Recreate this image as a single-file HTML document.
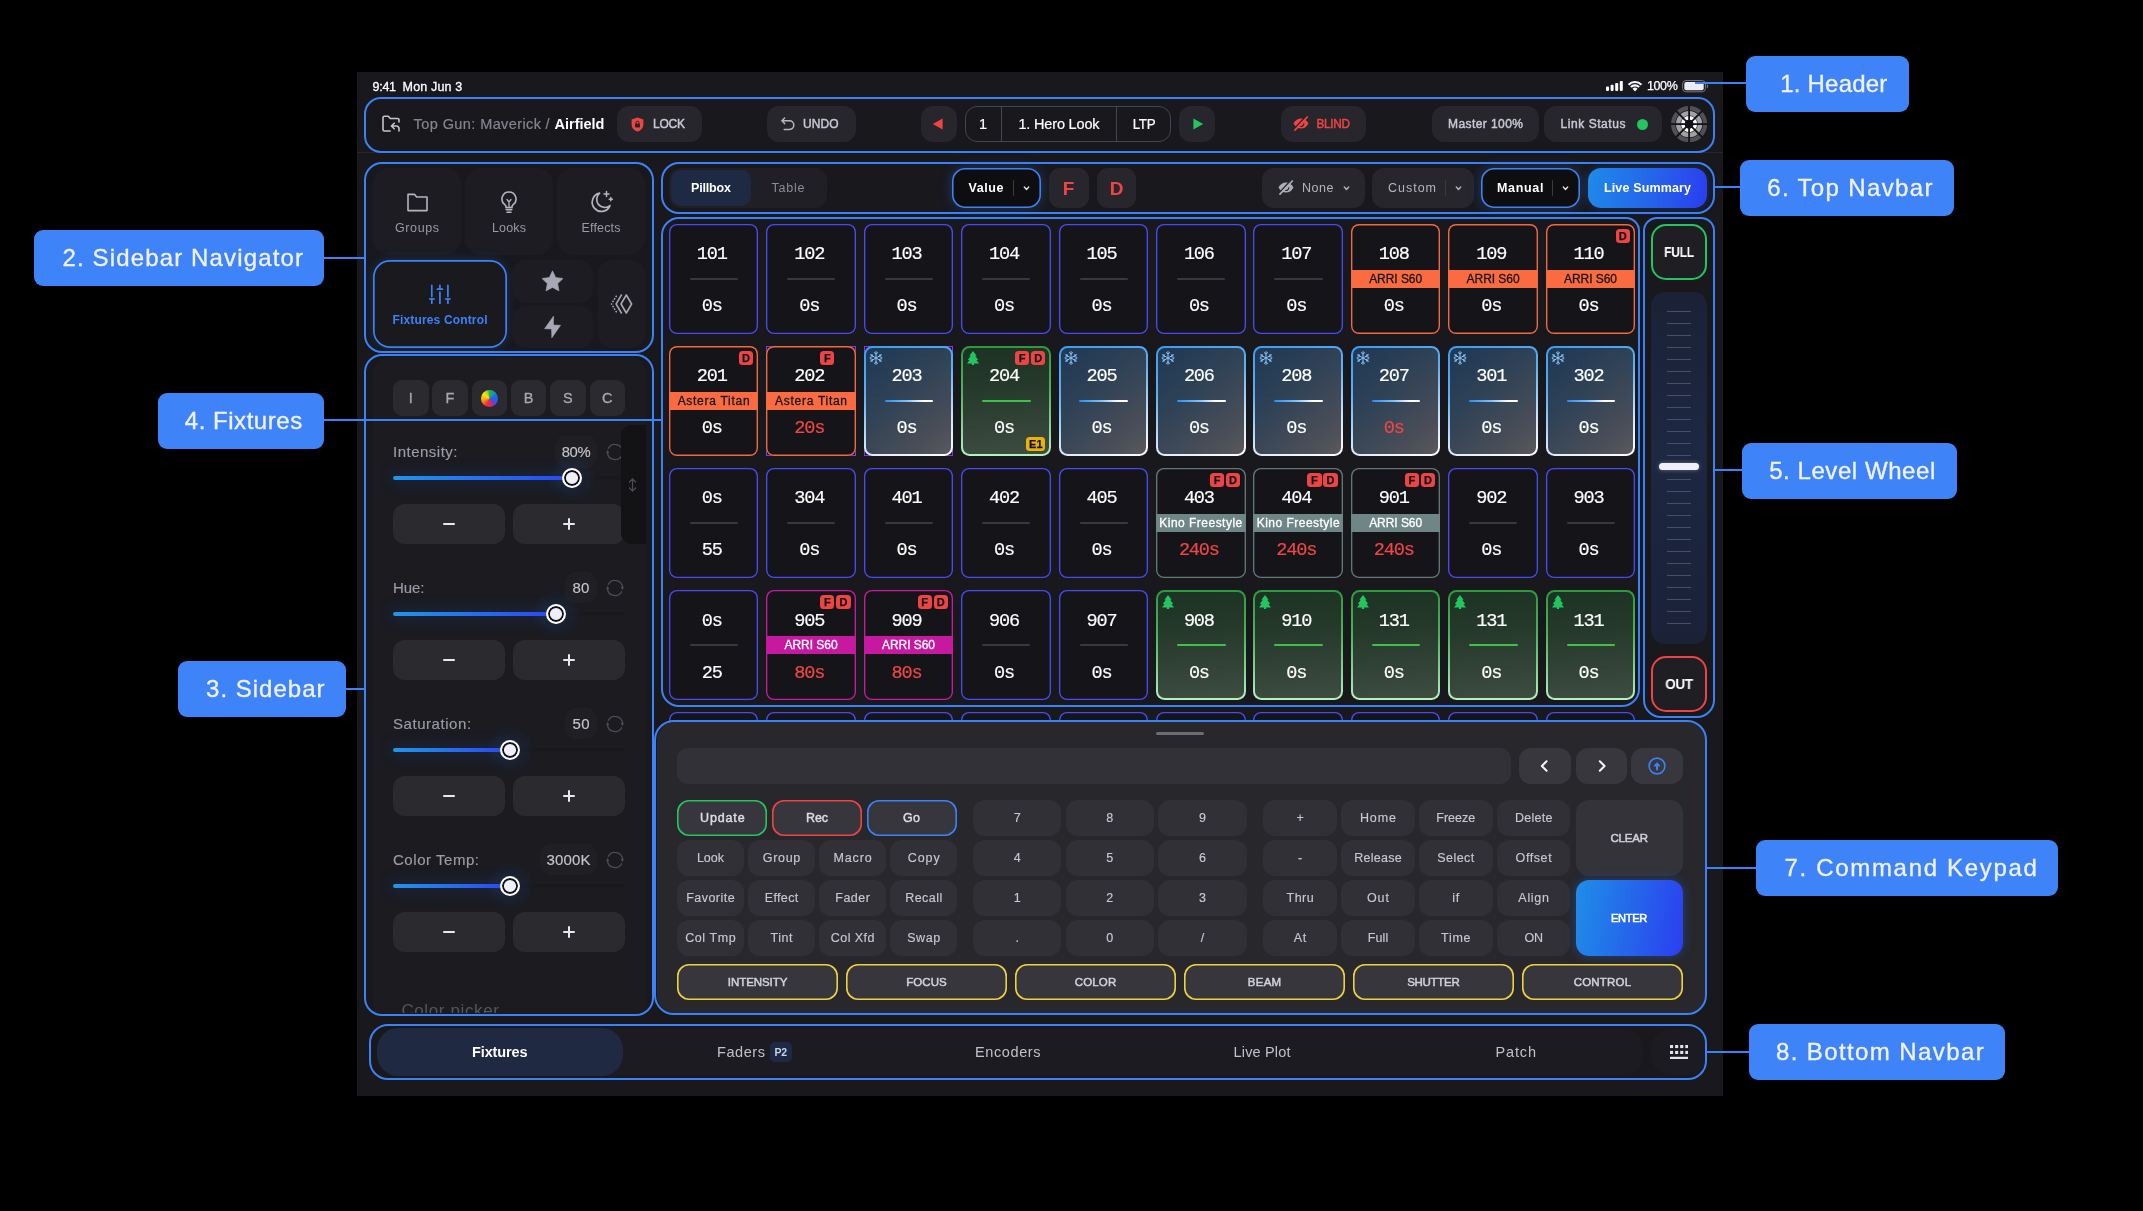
<!DOCTYPE html>
<html lang="en"><head><meta charset="utf-8"><title>Lighting Console UI</title><style>
*{box-sizing:border-box;margin:0;padding:0}
html,body{width:2143px;height:1211px;background:#000;overflow:hidden}
body{font-family:"Liberation Sans",sans-serif;color:#fff;position:relative}
div{position:absolute}
#w{left:0;top:0;width:2143px;height:1211px;will-change:transform}
.t{white-space:nowrap}
.ol{border:2px solid #3b82f6;border-radius:18px}
</style></head><body>
<div id="w">
<div style="left:357px;top:72px;width:1366px;height:1024px;background:#18181d;"></div>
<div style="left:357px;top:151.5px;width:1366px;height:1px;background:#26262b;"></div>
<div class="t" style="left:372.6px;top:78px;height:18px;font-size:12.5px;line-height:18px;color:#fff;-webkit-text-stroke:0.3px #fff;letter-spacing:-0.31px;">9:41</div>
<div class="t" style="left:402.6px;top:78px;height:18px;font-size:12.5px;line-height:18px;color:#fff;-webkit-text-stroke:0.3px #fff;letter-spacing:0.17px;">Mon Jun 3</div>
<svg style="position:absolute;left:1606px;top:81px;" width="17" height="10" viewBox="0 0 17 10"><rect x="0" y="5.5" width="3" height="4.4" rx=".8" fill="#fff"/><rect x="4.6" y="3.7" width="3" height="6.2" rx=".8" fill="#fff"/><rect x="9.2" y="1.9" width="3" height="8" rx=".8" fill="#fff"/><rect x="13.8" y="0.1" width="3" height="9.8" rx=".8" fill="#fff"/></svg>
<svg style="position:absolute;left:1626.6px;top:79.8px;" width="16" height="12" viewBox="0 0 16 12"><path d="M1.57 4.65A9.25 9.25 0 0 1 14.43 4.65" fill="none" stroke="#fff" stroke-width="2.1"/><path d="M3.87 7.02A5.95 5.95 0 0 1 12.13 7.02" fill="none" stroke="#fff" stroke-width="2.1"/><path d="M8 11.4 5.5 8.8A3.6 3.6 0 0 1 10.5 8.8z" fill="#fff"/></svg>
<div class="t" style="left:1462.35px;top:77px;width:400px;height:18px;margin-left:-0.18px;text-align:center;font-size:12.5px;line-height:18px;color:#fff;-webkit-text-stroke:0.25px #fff;letter-spacing:-0.36px;">100%</div>
<svg style="position:absolute;left:1681.5px;top:79.9px;" width="27" height="13" viewBox="0 0 27 13"><rect x=".6" y=".6" width="22.8" height="11.2" rx="3.3" fill="none" stroke="#77777d" stroke-width="1"/><rect x="2.3" y="2.1" width="19.4" height="8.2" rx="1.8" fill="#ececf8"/><path d="M24.8 4.2v4c.9-.3 1.4-1.1 1.4-2s-.5-1.7-1.4-2z" fill="#77777d"/></svg>
<div class="ol" style="left:364px;top:97px;width:1351px;height:56px;border-radius:17px;"></div>
<svg style="position:absolute;left:382px;top:115px;" width="19" height="18" viewBox="0 0 19 18"><path d="M8.2 16H2.4A1.4 1.4 0 0 1 1 14.6V2.6A1.4 1.4 0 0 1 2.4 1.2h3.9l2 2.3h7.3A1.4 1.4 0 0 1 17 4.9v2" fill="none" stroke="#c4c4cc" stroke-width="1.6" stroke-linecap="round" stroke-linejoin="round"/><path d="M12.2 8.2 9.4 11l2.8 2.8M9.6 11h4.6a2.8 2.8 0 0 1 2.8 2.8V16" fill="none" stroke="#c4c4cc" stroke-width="1.6" stroke-linecap="round" stroke-linejoin="round"/></svg>
<div class="t" style="left:413.6px;top:114px;height:20px;font-size:14.5px;line-height:20px;color:#85858f;-webkit-text-stroke:0.2px #85858f;letter-spacing:0.41px;">Top Gun: Maverick</div>
<div class="t" style="left:545.5px;top:114px;height:20px;font-size:14.5px;line-height:20px;color:#85858f;-webkit-text-stroke:0.2px #85858f;">/</div>
<div class="t" style="left:554.5px;top:114px;height:20px;font-size:14.5px;line-height:20px;color:#fff;font-weight:bold;">Airfield</div>
<div style="left:617px;top:106px;width:85px;height:36px;background:#26262c;border-radius:12px;"></div>
<svg style="position:absolute;left:630.5px;top:116.5px;" width="13" height="15" viewBox="0 0 13 15"><path d="M6.5.4 12.4 2.6v4.6c0 3.6-2.5 6.3-5.9 7.4C3.1 13.5.6 10.8.6 7.2V2.6z" fill="#ef4444"/><rect x="4" y="6.6" width="5" height="4" rx=".8" fill="#26262c"/><path d="M5 6.8V5.6a1.5 1.5 0 0 1 3 0v1.2" fill="none" stroke="#26262c" stroke-width="1"/></svg>
<div class="t" style="left:469px;top:115px;width:400px;height:18px;margin-left:-0.11px;text-align:center;font-size:12px;line-height:18px;color:#c8c8d4;-webkit-text-stroke:0.45px #c8c8d4;letter-spacing:-0.23px;">LOCK</div>
<div style="left:767px;top:106px;width:89px;height:36px;background:#26262c;border-radius:12px;"></div>
<svg style="position:absolute;left:780.5px;top:117px;" width="14" height="14" viewBox="0 0 14 14"><path d="M3.6 1 1 3.8l2.6 2.8" fill="none" stroke="#b8b8c0" stroke-width="1.5" stroke-linecap="round" stroke-linejoin="round"/><path d="M1.3 3.8h7.2a4.3 4.3 0 0 1 0 8.6H3.2" fill="none" stroke="#b8b8c0" stroke-width="1.5" stroke-linecap="round"/></svg>
<div class="t" style="left:620.75px;top:115px;width:400px;height:18px;margin-left:0.03px;text-align:center;font-size:12px;line-height:18px;color:#c8c8d4;-webkit-text-stroke:0.45px #c8c8d4;letter-spacing:0.06px;">UNDO</div>
<div style="left:921px;top:106px;width:36px;height:36px;background:#26262c;border-radius:12px;"></div>
<svg style="position:absolute;left:932px;top:118px;" width="11" height="12" viewBox="0 0 11 12"><path d="M10.6.6v10.8L.8 6z" fill="#ef4444"/></svg>
<div style="left:965px;top:106px;width:206px;height:36px;border:1px solid #45454d;border-radius:12px;"></div>
<div style="left:1001px;top:107px;width:1px;height:34px;background:#45454d;"></div>
<div style="left:1116px;top:107px;width:1px;height:34px;background:#45454d;"></div>
<div class="t" style="left:783px;top:114px;width:400px;height:20px;margin-left:0px;text-align:center;font-size:14.5px;line-height:20px;color:#fff;-webkit-text-stroke:0.2px #fff;">1</div>
<div class="t" style="left:859px;top:114px;width:400px;height:20px;margin-left:-0.09px;text-align:center;font-size:14.5px;line-height:20px;color:#fff;-webkit-text-stroke:0.2px #fff;letter-spacing:-0.18px;">1. Hero Look</div>
<div class="t" style="left:944px;top:114px;width:400px;height:20px;margin-left:-0.15px;text-align:center;font-size:14.5px;line-height:20px;color:#fff;-webkit-text-stroke:0.2px #fff;transform:scaleX(0.923);transform-origin:50% 50%;letter-spacing:-0.3px;">LTP</div>
<div style="left:1179px;top:106px;width:36px;height:36px;background:#26262c;border-radius:12px;"></div>
<svg style="position:absolute;left:1193px;top:118px;" width="11" height="12" viewBox="0 0 11 12"><path d="M.4.6v10.8L10.2 6z" fill="#22c55e"/></svg>
<div style="left:1281px;top:106px;width:85px;height:36px;background:#26262c;border-radius:12px;"></div>
<svg style="position:absolute;left:1292.6px;top:116.3px;" width="16" height="15" viewBox="0 0 16 15"><path d="M.5 7.5C2.4 3.9 5 2.4 8 2.4s5.6 1.5 7.5 5.1C13.6 11.1 11 12.6 8 12.6S2.4 11.1.5 7.5z" fill="#ef4444"/><path d="M7.6 10.5a3 3 0 0 0 3.3-3" fill="none" stroke="#26262c" stroke-width="1.1" stroke-linecap="round"/><path d="M13.1.1.9 13.3" stroke="#26262c" stroke-width="1.5"/><path d="M14.3 1 2 14.1" stroke="#ef4444" stroke-width="1.7" stroke-linecap="round"/></svg>
<div class="t" style="left:1133.25px;top:115px;width:400px;height:18px;margin-left:-0.15px;text-align:center;font-size:12px;line-height:18px;color:#ef4444;-webkit-text-stroke:0.45px #ef4444;transform:scaleX(0.981);transform-origin:50% 50%;letter-spacing:-0.3px;">BLIND</div>
<div style="left:1432px;top:106px;width:107px;height:36px;background:#26262c;border-radius:12px;"></div>
<div class="t" style="left:1285.5px;top:115px;width:400px;height:18px;margin-left:0.21px;text-align:center;font-size:12px;line-height:18px;color:#c8c8d4;-webkit-text-stroke:0.45px #c8c8d4;letter-spacing:0.43px;">Master 100%</div>
<div style="left:1544px;top:106px;width:118px;height:36px;background:#26262c;border-radius:12px;"></div>
<div class="t" style="left:1393px;top:115px;width:400px;height:18px;margin-left:0.28px;text-align:center;font-size:12px;line-height:18px;color:#c8c8d4;-webkit-text-stroke:0.45px #c8c8d4;letter-spacing:0.56px;">Link Status</div>
<div style="left:1636.5px;top:118.5px;width:11px;height:11px;background:#22c55e;border-radius:50%;"></div>
<svg style="position:absolute;left:1670.9px;top:105.9px;" width="36.2" height="36.2" viewBox="0 0 36.2 36.2"><circle cx="18.1" cy="18.1" r="16" fill="none" stroke="#505056" stroke-width="4.2"/><circle cx="18.1" cy="18.1" r="10.95" fill="none" stroke="#a2a2a6" stroke-width="4.4"/><circle cx="18.1" cy="18.1" r="6.2" fill="none" stroke="#ffffff" stroke-width="3.8"/><path d="M18.1 18.1L18.10 36.70" stroke="#131317" stroke-width="1.8"/><path d="M18.1 18.1L4.95 31.25" stroke="#131317" stroke-width="1.8"/><path d="M18.1 18.1L-0.50 18.10" stroke="#131317" stroke-width="1.8"/><path d="M18.1 18.1L4.95 4.95" stroke="#131317" stroke-width="1.8"/><path d="M18.1 18.1L18.10 -0.50" stroke="#131317" stroke-width="1.8"/><path d="M18.1 18.1L31.25 4.95" stroke="#131317" stroke-width="1.8"/><path d="M18.1 18.1L36.70 18.10" stroke="#131317" stroke-width="1.8"/><path d="M18.1 18.1L31.25 31.25" stroke="#131317" stroke-width="1.8"/><circle cx="18.1" cy="18.1" r="4.4" fill="#131317"/></svg>
<div class="ol" style="left:661px;top:162px;width:1054px;height:52px;"></div>
<div style="left:668.5px;top:168px;width:158.5px;height:40px;background:#1f1f25;border-radius:12px;"></div>
<div style="left:671px;top:170px;width:80px;height:36px;background:#1e2a44;border-radius:10px;"></div>
<div class="t" style="left:511px;top:179px;width:400px;height:18px;margin-left:-0.08px;text-align:center;font-size:12.5px;line-height:18px;color:#fff;font-weight:bold;letter-spacing:-0.16px;">Pillbox</div>
<div class="t" style="left:588px;top:179px;width:400px;height:18px;margin-left:0.39px;text-align:center;font-size:12.5px;line-height:18px;color:#8c8c96;letter-spacing:0.78px;">Table</div>
<div style="left:952.4px;top:167.8px;width:88.4px;height:40.4px;background:#0e0e11;box-shadow:inset 0 0 0 1.6px #3b82f6,0 0 14px rgba(59,130,246,.30);border-radius:13px;"></div>
<div class="t" style="left:786px;top:179px;width:400px;height:18px;margin-left:0.29px;text-align:center;font-size:12.5px;line-height:18px;color:#fff;font-weight:bold;letter-spacing:0.58px;">Value</div>
<div style="left:1012.5px;top:180px;width:1px;height:16px;background:#3a3a42;"></div>
<svg style="position:absolute;left:1023px;top:186px;" width="7" height="5" viewBox="0 0 7 5"><path d="M1.3 1.1l2.2 2.3 2.2-2.3" fill="none" stroke="#e0e0e8" stroke-width="1.4" stroke-linecap="round" stroke-linejoin="round"/></svg>
<div style="left:1049px;top:168px;width:39.5px;height:40px;background:#26262c;border-radius:11px;"></div>
<div class="t" style="left:868.5px;top:176px;width:400px;height:25px;margin-left:0px;text-align:center;font-size:19px;line-height:25px;color:#ef4444;font-weight:bold;">F</div>
<div style="left:1096.5px;top:168px;width:39.5px;height:40px;background:#26262c;border-radius:11px;"></div>
<div class="t" style="left:916.5px;top:176px;width:400px;height:25px;margin-left:0px;text-align:center;font-size:19px;line-height:25px;color:#ef4444;font-weight:bold;">D</div>
<div style="left:1262px;top:168px;width:102.5px;height:40px;background:#26262c;border-radius:12px;"></div>
<svg style="position:absolute;left:1278.2px;top:180.4px;" width="16" height="15" viewBox="0 0 16 15"><path d="M.5 7.5C2.4 3.9 5 2.4 8 2.4s5.6 1.5 7.5 5.1C13.6 11.1 11 12.6 8 12.6S2.4 11.1.5 7.5z" fill="#aeaeb8"/><path d="M7.6 10.5a3 3 0 0 0 3.3-3" fill="none" stroke="#26262c" stroke-width="1.1" stroke-linecap="round"/><path d="M13.1.1.9 13.3" stroke="#26262c" stroke-width="1.5"/><path d="M14.3 1 2 14.1" stroke="#aeaeb8" stroke-width="1.7" stroke-linecap="round"/></svg>
<div class="t" style="left:1117.75px;top:179px;width:400px;height:18px;margin-left:0.27px;text-align:center;font-size:12.5px;line-height:18px;color:#b4b4bc;letter-spacing:0.54px;">None</div>
<svg style="position:absolute;left:1342.5px;top:186px;" width="7" height="5" viewBox="0 0 7 5"><path d="M1.3 1.1l2.2 2.3 2.2-2.3" fill="none" stroke="#b4b4bc" stroke-width="1.4" stroke-linecap="round" stroke-linejoin="round"/></svg>
<div style="left:1372px;top:168px;width:101.5px;height:40px;background:#26262c;border-radius:12px;"></div>
<div class="t" style="left:1212px;top:179px;width:400px;height:18px;margin-left:0.49px;text-align:center;font-size:12.5px;line-height:18px;color:#b4b4bc;letter-spacing:0.99px;">Custom</div>
<div style="left:1445px;top:180px;width:1px;height:16px;background:#3a3a42;"></div>
<svg style="position:absolute;left:1455px;top:186px;" width="7" height="5" viewBox="0 0 7 5"><path d="M1.3 1.1l2.2 2.3 2.2-2.3" fill="none" stroke="#b4b4bc" stroke-width="1.4" stroke-linecap="round" stroke-linejoin="round"/></svg>
<div style="left:1480.6px;top:167.8px;width:99.8px;height:40.4px;background:#0e0e11;box-shadow:inset 0 0 0 1.6px #3b82f6,0 0 14px rgba(59,130,246,.30);border-radius:13px;"></div>
<div class="t" style="left:1320.25px;top:179px;width:400px;height:18px;margin-left:0.34px;text-align:center;font-size:12.5px;line-height:18px;color:#fff;font-weight:bold;letter-spacing:0.69px;">Manual</div>
<div style="left:1552px;top:180px;width:1px;height:16px;background:#3a3a42;"></div>
<svg style="position:absolute;left:1562px;top:186px;" width="7" height="5" viewBox="0 0 7 5"><path d="M1.3 1.1l2.2 2.3 2.2-2.3" fill="none" stroke="#e0e0e8" stroke-width="1.4" stroke-linecap="round" stroke-linejoin="round"/></svg>
<div style="left:1588px;top:168px;width:119px;height:40px;background:linear-gradient(100deg,#1f8ae8 0%,#2563eb 55%,#2b3df0 100%);border-radius:13px;box-shadow:0 0 10px rgba(37,99,235,.35);"></div>
<div class="t" style="left:1447.5px;top:179px;width:400px;height:18px;margin-left:0.07px;text-align:center;font-size:12.5px;line-height:18px;color:#fff;font-weight:bold;letter-spacing:0.14px;">Live Summary</div>
<div class="ol" style="left:364px;top:162px;width:290px;height:191px;"></div>
<div style="left:373px;top:168px;width:88px;height:87px;background:#1c1c22;border-radius:16px;"></div>
<div class="t" style="left:217px;top:219px;width:400px;height:18px;margin-left:0.3px;text-align:center;font-size:12.5px;line-height:18px;color:#9a9aa4;letter-spacing:0.6px;">Groups</div>
<div style="left:465px;top:168px;width:88px;height:87px;background:#1c1c22;border-radius:16px;"></div>
<div class="t" style="left:309px;top:219px;width:400px;height:18px;margin-left:0.08px;text-align:center;font-size:12.5px;line-height:18px;color:#9a9aa4;letter-spacing:0.16px;">Looks</div>
<div style="left:557px;top:168px;width:88px;height:87px;background:#1c1c22;border-radius:16px;"></div>
<div class="t" style="left:401px;top:219px;width:400px;height:18px;margin-left:0.08px;text-align:center;font-size:12.5px;line-height:18px;color:#9a9aa4;letter-spacing:0.17px;">Effects</div>
<svg style="position:absolute;left:406.5px;top:192.5px;" width="21" height="19" viewBox="0 0 21 19"><path d="M1 17.6V1.4h6.6l2 2.6H20v13.6z" fill="none" stroke="#b4b4bc" stroke-width="1.6" stroke-linejoin="round"/></svg>
<svg style="position:absolute;left:500px;top:191px;" width="18" height="23" viewBox="0 0 18 23"><path d="M9 1a7 7 0 0 0-4.2 12.6c.7.6 1.2 1.3 1.2 2.1v.8h6v-.8c0-.8.5-1.5 1.2-2.1A7 7 0 0 0 9 1z" fill="none" stroke="#b4b4bc" stroke-width="1.6"/><path d="M6.2 18.6h5.6M7 21.2h4" stroke="#b4b4bc" stroke-width="1.6" stroke-linecap="round"/><path d="M7 8.5 9 11l2-2.5M9 11v5" fill="none" stroke="#b4b4bc" stroke-width="1.3" stroke-linecap="round" stroke-linejoin="round"/></svg>
<svg style="position:absolute;left:590px;top:189.5px;" width="24" height="24" viewBox="0 0 24 24"><path d="M9.6 3.2A9.2 9.2 0 1 0 20 15.6 7.6 7.6 0 0 1 9.6 3.2z" fill="none" stroke="#b4b4bc" stroke-width="1.7" stroke-linejoin="round"/><path d="M16.5 1.5v5M14 4h5M20.8 7.6v3.2M19.2 9.2h3.2" stroke="#b4b4bc" stroke-width="1.5" stroke-linecap="round"/></svg>
<div style="left:373px;top:260px;width:134px;height:87.5px;background:#19191e;border-radius:17px;box-shadow:inset 0 0 0 1.7px #3b82f6,0 0 12px rgba(59,130,246,.22);"></div>
<svg style="position:absolute;left:429px;top:283.5px;" width="22" height="20" viewBox="0 0 22 20"><path d="M2.8 1.3V12.6M2.8 15v4.4M10.9 1.3V5M10.9 8.2V19.4M18.9 1.3V12.6M18.9 15v4.4" stroke="#3b82f6" stroke-width="1.7" stroke-linecap="round"/><path d="M.6 15h4.6M8.4 5.2h5M16.6 15h4.6" stroke="#3b82f6" stroke-width="1.7" stroke-linecap="round"/></svg>
<div class="t" style="left:240px;top:311px;width:400px;height:18px;margin-left:0.08px;text-align:center;font-size:12px;line-height:18px;color:#3b82f6;font-weight:bold;letter-spacing:0.16px;">Fixtures Control</div>
<div style="left:512px;top:260px;width:80.7px;height:42.5px;background:#1c1c22;border-radius:14px;"></div>
<svg style="position:absolute;left:540.5px;top:270px;" width="23" height="22" viewBox="0 0 23 22"><path d="M11.5.8l3.2 6.7 7.3 1-5.3 5.1 1.3 7.3-6.5-3.5L5 20.9l1.3-7.3L1 8.5l7.3-1z" fill="#a8a8b4" stroke="#a8a8b4" stroke-width=".6" stroke-linejoin="round"/></svg>
<div style="left:512px;top:305.5px;width:80.7px;height:42.3px;background:#1c1c22;border-radius:14px;"></div>
<svg style="position:absolute;left:543.5px;top:316px;" width="17" height="22" viewBox="0 0 17 22"><path d="M9.6 0 .5 12.7l7 .3.3 8.9L16.6 9.3 9.5 9z" fill="#a8a8b4" stroke="#a8a8b4" stroke-width=".5" stroke-linejoin="round"/></svg>
<div style="left:597.5px;top:260px;width:47.5px;height:87.5px;background:#1c1c22;border-radius:14px;"></div>
<svg style="position:absolute;left:609px;top:293px;" width="24" height="22" viewBox="0 0 24 22"><path d="M17.3 2 22.6 11 17.3 20 12 11z" fill="none" stroke="#a8a8b0" stroke-width="1.6" stroke-linejoin="round"/><path d="M12.4 2 7.1 11l5.3 9" fill="none" stroke="#a8a8b0" stroke-width="1.5" stroke-linejoin="round" stroke-linecap="round"/><path d="M7.6 2.6 2.5 11l5.1 8.4" fill="none" stroke="#a8a8b0" stroke-width="1.4" stroke-dasharray="1.7 1.3"/></svg>
<div style="left:373px;top:357px;width:272.5px;height:656px;background:#1b1b20;border-radius:15px 15px 0 0;"></div>
<div style="left:393px;top:380px;width:35.5px;height:36px;background:#2a2a2f;border-radius:9px;"></div>
<div class="t" style="left:210.75px;top:388px;width:400px;height:20px;margin-left:0px;text-align:center;font-size:14.5px;line-height:20px;color:#a8a8b2;-webkit-text-stroke:0.3px #a8a8b2;">I</div>
<div style="left:432.3px;top:380px;width:35.5px;height:36px;background:#2a2a2f;border-radius:9px;"></div>
<div class="t" style="left:250.05px;top:388px;width:400px;height:20px;margin-left:0px;text-align:center;font-size:14.5px;line-height:20px;color:#a8a8b2;-webkit-text-stroke:0.3px #a8a8b2;">F</div>
<div style="left:471.6px;top:380px;width:35.5px;height:36px;background:#2a2a2f;border-radius:9px;"></div>
<div style="left:510.9px;top:380px;width:35.5px;height:36px;background:#2a2a2f;border-radius:9px;"></div>
<div class="t" style="left:328.65px;top:388px;width:400px;height:20px;margin-left:0px;text-align:center;font-size:14.5px;line-height:20px;color:#a8a8b2;-webkit-text-stroke:0.3px #a8a8b2;">B</div>
<div style="left:550.2px;top:380px;width:35.5px;height:36px;background:#2a2a2f;border-radius:9px;"></div>
<div class="t" style="left:367.95px;top:388px;width:400px;height:20px;margin-left:0px;text-align:center;font-size:14.5px;line-height:20px;color:#a8a8b2;-webkit-text-stroke:0.3px #a8a8b2;">S</div>
<div style="left:589.5px;top:380px;width:35.5px;height:36px;background:#2a2a2f;border-radius:9px;"></div>
<div class="t" style="left:407.25px;top:388px;width:400px;height:20px;margin-left:0px;text-align:center;font-size:14.5px;line-height:20px;color:#a8a8b2;-webkit-text-stroke:0.3px #a8a8b2;">C</div>
<div style="left:480.5px;top:389.5px;width:17px;height:17px;border-radius:50%;background:conic-gradient(from 0deg,#2fb050 0deg,#10a098 35deg,#1a6af0 70deg,#2060f0 100deg,#6a40c8 135deg,#e02470 170deg,#f02838 200deg,#f56a1f 235deg,#ffb010 265deg,#ffe600 310deg,#a8d428 340deg,#2fb050 360deg);"></div>
<div class="t" style="left:393px;top:441px;height:21px;font-size:15px;line-height:21px;color:#9c9ca6;-webkit-text-stroke:0.15px #9c9ca6;letter-spacing:0.5px;">Intensity:</div>
<div style="left:555px;top:436.2px;width:42.3px;height:31.4px;background:#1f1f24;border-radius:10px;"></div>
<div class="t" style="left:376px;top:441px;width:400px;height:21px;margin-left:-0.15px;text-align:center;font-size:15px;line-height:21px;color:#c4c4cc;-webkit-text-stroke:0.15px #c4c4cc;transform:scaleX(0.986);transform-origin:50% 50%;letter-spacing:-0.3px;">80%</div>
<svg style="position:absolute;left:606px;top:442.7px;" width="18" height="18" viewBox="0 0 18 18"><path d="M2.11 5.79A7.6 7.6 0 0 1 16.57 8.34M15.89 12.21A7.6 7.6 0 0 1 1.43 9.66" fill="none" stroke="#4c4c56" stroke-width="1.3"/><path d="M14.7 8.1h3.3l-1.6 3.1zM0 9.9h3.3L1.6 6.8z" fill="#4c4c56"/></svg>
<div style="left:393px;top:475.9px;width:232px;height:4.2px;background:#19191d;border-radius:2px;"></div>
<div style="left:542px;top:448px;width:60px;height:60px;background:radial-gradient(circle,rgba(40,110,220,.16) 0%,rgba(40,110,220,.06) 40%,rgba(40,110,220,0) 60%);"></div>
<div style="left:393px;top:475.9px;width:179px;height:4.2px;background:linear-gradient(90deg,#1f96ea,#2b47f2);border-radius:2px;box-shadow:0 0 16px 3px rgba(37,99,235,.17);"></div>
<div style="left:562px;top:468px;width:20px;height:20px;background:#eeeefc;border:2px solid #fff;border-radius:50%;box-shadow:inset 0 0 0 1.9px #111115;"></div>
<div style="left:393px;top:504px;width:112px;height:40px;background:#2a2a2f;border-radius:12px;"></div>
<div style="left:513px;top:504px;width:112px;height:40px;background:#2a2a2f;border-radius:12px;"></div>
<div style="left:443.2px;top:523px;width:12px;height:1.8px;background:#e8e8f0;border-radius:1px;"></div>
<div style="left:563px;top:523px;width:12px;height:1.8px;background:#e8e8f0;border-radius:1px;"></div>
<div style="left:568.1px;top:517.9px;width:1.8px;height:12px;background:#e8e8f0;border-radius:1px;"></div>
<div class="t" style="left:393px;top:577px;height:21px;font-size:15px;line-height:21px;color:#9c9ca6;-webkit-text-stroke:0.15px #9c9ca6;letter-spacing:-0.06px;">Hue:</div>
<div style="left:565.3px;top:572.1px;width:32px;height:31.4px;background:#1f1f24;border-radius:10px;"></div>
<div class="t" style="left:380.95px;top:577px;width:400px;height:21px;margin-left:0.11px;text-align:center;font-size:15px;line-height:21px;color:#c4c4cc;-webkit-text-stroke:0.15px #c4c4cc;letter-spacing:0.22px;">80</div>
<svg style="position:absolute;left:606px;top:578.6px;" width="18" height="18" viewBox="0 0 18 18"><path d="M2.11 5.79A7.6 7.6 0 0 1 16.57 8.34M15.89 12.21A7.6 7.6 0 0 1 1.43 9.66" fill="none" stroke="#4c4c56" stroke-width="1.3"/><path d="M14.7 8.1h3.3l-1.6 3.1zM0 9.9h3.3L1.6 6.8z" fill="#4c4c56"/></svg>
<div style="left:393px;top:611.8px;width:232px;height:4.2px;background:#19191d;border-radius:2px;"></div>
<div style="left:526px;top:583.9px;width:60px;height:60px;background:radial-gradient(circle,rgba(40,110,220,.16) 0%,rgba(40,110,220,.06) 40%,rgba(40,110,220,0) 60%);"></div>
<div style="left:393px;top:611.8px;width:163px;height:4.2px;background:linear-gradient(90deg,#1f96ea,#2b47f2);border-radius:2px;box-shadow:0 0 16px 3px rgba(37,99,235,.17);"></div>
<div style="left:546px;top:603.9px;width:20px;height:20px;background:#eeeefc;border:2px solid #fff;border-radius:50%;box-shadow:inset 0 0 0 1.9px #111115;"></div>
<div style="left:393px;top:639.9px;width:112px;height:40px;background:#2a2a2f;border-radius:12px;"></div>
<div style="left:513px;top:639.9px;width:112px;height:40px;background:#2a2a2f;border-radius:12px;"></div>
<div style="left:443.2px;top:658.9px;width:12px;height:1.8px;background:#e8e8f0;border-radius:1px;"></div>
<div style="left:563px;top:658.9px;width:12px;height:1.8px;background:#e8e8f0;border-radius:1px;"></div>
<div style="left:568.1px;top:653.8px;width:1.8px;height:12px;background:#e8e8f0;border-radius:1px;"></div>
<div class="t" style="left:393px;top:713px;height:21px;font-size:15px;line-height:21px;color:#9c9ca6;-webkit-text-stroke:0.15px #9c9ca6;letter-spacing:0.55px;">Saturation:</div>
<div style="left:565.3px;top:708.1px;width:32px;height:31.4px;background:#1f1f24;border-radius:10px;"></div>
<div class="t" style="left:381.05px;top:713px;width:400px;height:21px;margin-left:0.31px;text-align:center;font-size:15px;line-height:21px;color:#c4c4cc;-webkit-text-stroke:0.15px #c4c4cc;letter-spacing:0.62px;">50</div>
<svg style="position:absolute;left:606px;top:714.6px;" width="18" height="18" viewBox="0 0 18 18"><path d="M2.11 5.79A7.6 7.6 0 0 1 16.57 8.34M15.89 12.21A7.6 7.6 0 0 1 1.43 9.66" fill="none" stroke="#4c4c56" stroke-width="1.3"/><path d="M14.7 8.1h3.3l-1.6 3.1zM0 9.9h3.3L1.6 6.8z" fill="#4c4c56"/></svg>
<div style="left:393px;top:747.8px;width:232px;height:4.2px;background:#19191d;border-radius:2px;"></div>
<div style="left:480px;top:719.9px;width:60px;height:60px;background:radial-gradient(circle,rgba(40,110,220,.16) 0%,rgba(40,110,220,.06) 40%,rgba(40,110,220,0) 60%);"></div>
<div style="left:393px;top:747.8px;width:117px;height:4.2px;background:linear-gradient(90deg,#1f96ea,#2b47f2);border-radius:2px;box-shadow:0 0 16px 3px rgba(37,99,235,.17);"></div>
<div style="left:500px;top:739.9px;width:20px;height:20px;background:#eeeefc;border:2px solid #fff;border-radius:50%;box-shadow:inset 0 0 0 1.9px #111115;"></div>
<div style="left:393px;top:775.9px;width:112px;height:40px;background:#2a2a2f;border-radius:12px;"></div>
<div style="left:513px;top:775.9px;width:112px;height:40px;background:#2a2a2f;border-radius:12px;"></div>
<div style="left:443.2px;top:794.9px;width:12px;height:1.8px;background:#e8e8f0;border-radius:1px;"></div>
<div style="left:563px;top:794.9px;width:12px;height:1.8px;background:#e8e8f0;border-radius:1px;"></div>
<div style="left:568.1px;top:789.8px;width:1.8px;height:12px;background:#e8e8f0;border-radius:1px;"></div>
<div class="t" style="left:393px;top:849px;height:21px;font-size:15px;line-height:21px;color:#9c9ca6;-webkit-text-stroke:0.15px #9c9ca6;letter-spacing:0.54px;">Color Temp:</div>
<div style="left:540.2px;top:844.1px;width:57.1px;height:31.4px;background:#1f1f24;border-radius:10px;"></div>
<div class="t" style="left:368.5px;top:849px;width:400px;height:21px;margin-left:0.08px;text-align:center;font-size:15px;line-height:21px;color:#c4c4cc;-webkit-text-stroke:0.15px #c4c4cc;letter-spacing:0.16px;">3000K</div>
<svg style="position:absolute;left:606px;top:850.6px;" width="18" height="18" viewBox="0 0 18 18"><path d="M2.11 5.79A7.6 7.6 0 0 1 16.57 8.34M15.89 12.21A7.6 7.6 0 0 1 1.43 9.66" fill="none" stroke="#4c4c56" stroke-width="1.3"/><path d="M14.7 8.1h3.3l-1.6 3.1zM0 9.9h3.3L1.6 6.8z" fill="#4c4c56"/></svg>
<div style="left:393px;top:883.8px;width:232px;height:4.2px;background:#19191d;border-radius:2px;"></div>
<div style="left:480px;top:855.9px;width:60px;height:60px;background:radial-gradient(circle,rgba(40,110,220,.16) 0%,rgba(40,110,220,.06) 40%,rgba(40,110,220,0) 60%);"></div>
<div style="left:393px;top:883.8px;width:117px;height:4.2px;background:linear-gradient(90deg,#1f96ea,#2b47f2);border-radius:2px;box-shadow:0 0 16px 3px rgba(37,99,235,.17);"></div>
<div style="left:500px;top:875.9px;width:20px;height:20px;background:#eeeefc;border:2px solid #fff;border-radius:50%;box-shadow:inset 0 0 0 1.9px #111115;"></div>
<div style="left:393px;top:911.9px;width:112px;height:40px;background:#2a2a2f;border-radius:12px;"></div>
<div style="left:513px;top:911.9px;width:112px;height:40px;background:#2a2a2f;border-radius:12px;"></div>
<div style="left:443.2px;top:930.9px;width:12px;height:1.8px;background:#e8e8f0;border-radius:1px;"></div>
<div style="left:563px;top:930.9px;width:12px;height:1.8px;background:#e8e8f0;border-radius:1px;"></div>
<div style="left:568.1px;top:925.8px;width:1.8px;height:12px;background:#e8e8f0;border-radius:1px;"></div>
<div style="left:621px;top:424.5px;width:24.5px;height:119.5px;background:#131316;border-radius:11px 0 0 11px;"></div>
<svg style="position:absolute;left:627.5px;top:477.5px;" width="9" height="14" viewBox="0 0 9 14"><path d="M4.5 1.2v11.6M1.4 4 4.5 1l3.1 3M1.4 10l3.1 3 3.1-3" fill="none" stroke="#4c4c54" stroke-width="1.2" stroke-linecap="round" stroke-linejoin="round"/></svg>
<div style="left:373px;top:995px;width:272px;height:18px;overflow:hidden;"><div class="t" style="left:28.4px;top:5px;font-size:17px;line-height:22px;color:#55555d;letter-spacing:.62px;">Color picker</div></div>
<div class="ol" style="left:364px;top:354px;width:290px;height:662px;"></div>
<div style="left:668.85px;top:712.1px;width:89.55px;height:109.8px;background:#151519;box-shadow:inset 0 0 0 1.35px #4a4af2;border-radius:8px;"></div>
<div style="left:766.28px;top:712.1px;width:89.55px;height:109.8px;background:#151519;box-shadow:inset 0 0 0 1.35px #4a4af2;border-radius:8px;"></div>
<div style="left:863.71px;top:712.1px;width:89.55px;height:109.8px;background:#151519;box-shadow:inset 0 0 0 1.35px #4a4af2;border-radius:8px;"></div>
<div style="left:961.14px;top:712.1px;width:89.55px;height:109.8px;background:#151519;box-shadow:inset 0 0 0 1.35px #4a4af2;border-radius:8px;"></div>
<div style="left:1058.57px;top:712.1px;width:89.55px;height:109.8px;background:#151519;box-shadow:inset 0 0 0 1.35px #4a4af2;border-radius:8px;"></div>
<div style="left:1156px;top:712.1px;width:89.55px;height:109.8px;background:#151519;box-shadow:inset 0 0 0 1.35px #4a4af2;border-radius:8px;"></div>
<div style="left:1253.43px;top:712.1px;width:89.55px;height:109.8px;background:#151519;box-shadow:inset 0 0 0 1.35px #4a4af2;border-radius:8px;"></div>
<div style="left:1350.86px;top:712.1px;width:89.55px;height:109.8px;background:#151519;box-shadow:inset 0 0 0 1.35px #4a4af2;border-radius:8px;"></div>
<div style="left:1448.29px;top:712.1px;width:89.55px;height:109.8px;background:#151519;box-shadow:inset 0 0 0 1.35px #4a4af2;border-radius:8px;"></div>
<div style="left:1545.72px;top:712.1px;width:89.55px;height:109.8px;background:#151519;box-shadow:inset 0 0 0 1.35px #4a4af2;border-radius:8px;"></div>
<div style="left:668.85px;top:223.9px;width:89.55px;height:109.8px;background:#151519;box-shadow:inset 0 0 0 1.35px #4a4af2;border-radius:8px;"></div>
<div class="t" style="left:696.73px;top:242px;height:25px;font-size:18.6px;line-height:25px;color:#fff;font-family:'Liberation Mono',monospace;letter-spacing:-1.16px;-webkit-text-stroke:.18px #fff;">101</div>
<div class="t" style="left:701.73px;top:294px;height:25px;font-size:18.6px;line-height:25px;color:#fff;font-family:'Liberation Mono',monospace;letter-spacing:-1.16px;-webkit-text-stroke:.18px #fff;">0s</div>
<div style="left:689.85px;top:277.9px;width:48.15px;height:2px;background:#38383e;border-radius:1px;"></div>
<div style="left:766.28px;top:223.9px;width:89.55px;height:109.8px;background:#151519;box-shadow:inset 0 0 0 1.35px #4a4af2;border-radius:8px;"></div>
<div class="t" style="left:794.15px;top:242px;height:25px;font-size:18.6px;line-height:25px;color:#fff;font-family:'Liberation Mono',monospace;letter-spacing:-1.16px;-webkit-text-stroke:.18px #fff;">102</div>
<div class="t" style="left:799.15px;top:294px;height:25px;font-size:18.6px;line-height:25px;color:#fff;font-family:'Liberation Mono',monospace;letter-spacing:-1.16px;-webkit-text-stroke:.18px #fff;">0s</div>
<div style="left:787.28px;top:277.9px;width:48.15px;height:2px;background:#38383e;border-radius:1px;"></div>
<div style="left:863.71px;top:223.9px;width:89.55px;height:109.8px;background:#151519;box-shadow:inset 0 0 0 1.35px #4a4af2;border-radius:8px;"></div>
<div class="t" style="left:891.59px;top:242px;height:25px;font-size:18.6px;line-height:25px;color:#fff;font-family:'Liberation Mono',monospace;letter-spacing:-1.16px;-webkit-text-stroke:.18px #fff;">103</div>
<div class="t" style="left:896.59px;top:294px;height:25px;font-size:18.6px;line-height:25px;color:#fff;font-family:'Liberation Mono',monospace;letter-spacing:-1.16px;-webkit-text-stroke:.18px #fff;">0s</div>
<div style="left:884.71px;top:277.9px;width:48.15px;height:2px;background:#38383e;border-radius:1px;"></div>
<div style="left:961.14px;top:223.9px;width:89.55px;height:109.8px;background:#151519;box-shadow:inset 0 0 0 1.35px #4a4af2;border-radius:8px;"></div>
<div class="t" style="left:989.02px;top:242px;height:25px;font-size:18.6px;line-height:25px;color:#fff;font-family:'Liberation Mono',monospace;letter-spacing:-1.16px;-webkit-text-stroke:.18px #fff;">104</div>
<div class="t" style="left:994.02px;top:294px;height:25px;font-size:18.6px;line-height:25px;color:#fff;font-family:'Liberation Mono',monospace;letter-spacing:-1.16px;-webkit-text-stroke:.18px #fff;">0s</div>
<div style="left:982.14px;top:277.9px;width:48.15px;height:2px;background:#38383e;border-radius:1px;"></div>
<div style="left:1058.57px;top:223.9px;width:89.55px;height:109.8px;background:#151519;box-shadow:inset 0 0 0 1.35px #4a4af2;border-radius:8px;"></div>
<div class="t" style="left:1086.45px;top:242px;height:25px;font-size:18.6px;line-height:25px;color:#fff;font-family:'Liberation Mono',monospace;letter-spacing:-1.16px;-webkit-text-stroke:.18px #fff;">105</div>
<div class="t" style="left:1091.45px;top:294px;height:25px;font-size:18.6px;line-height:25px;color:#fff;font-family:'Liberation Mono',monospace;letter-spacing:-1.16px;-webkit-text-stroke:.18px #fff;">0s</div>
<div style="left:1079.57px;top:277.9px;width:48.15px;height:2px;background:#38383e;border-radius:1px;"></div>
<div style="left:1156px;top:223.9px;width:89.55px;height:109.8px;background:#151519;box-shadow:inset 0 0 0 1.35px #4a4af2;border-radius:8px;"></div>
<div class="t" style="left:1183.88px;top:242px;height:25px;font-size:18.6px;line-height:25px;color:#fff;font-family:'Liberation Mono',monospace;letter-spacing:-1.16px;-webkit-text-stroke:.18px #fff;">106</div>
<div class="t" style="left:1188.88px;top:294px;height:25px;font-size:18.6px;line-height:25px;color:#fff;font-family:'Liberation Mono',monospace;letter-spacing:-1.16px;-webkit-text-stroke:.18px #fff;">0s</div>
<div style="left:1177px;top:277.9px;width:48.15px;height:2px;background:#38383e;border-radius:1px;"></div>
<div style="left:1253.43px;top:223.9px;width:89.55px;height:109.8px;background:#151519;box-shadow:inset 0 0 0 1.35px #4a4af2;border-radius:8px;"></div>
<div class="t" style="left:1281.31px;top:242px;height:25px;font-size:18.6px;line-height:25px;color:#fff;font-family:'Liberation Mono',monospace;letter-spacing:-1.16px;-webkit-text-stroke:.18px #fff;">107</div>
<div class="t" style="left:1286.31px;top:294px;height:25px;font-size:18.6px;line-height:25px;color:#fff;font-family:'Liberation Mono',monospace;letter-spacing:-1.16px;-webkit-text-stroke:.18px #fff;">0s</div>
<div style="left:1274.43px;top:277.9px;width:48.15px;height:2px;background:#38383e;border-radius:1px;"></div>
<div style="left:1350.86px;top:223.9px;width:89.55px;height:109.8px;background:#151519;box-shadow:inset 0 0 0 1.4px #f2683f;border-radius:8px;"></div>
<div class="t" style="left:1378.74px;top:242px;height:25px;font-size:18.6px;line-height:25px;color:#fff;font-family:'Liberation Mono',monospace;letter-spacing:-1.16px;-webkit-text-stroke:.18px #fff;">108</div>
<div class="t" style="left:1383.74px;top:294px;height:25px;font-size:18.6px;line-height:25px;color:#fff;font-family:'Liberation Mono',monospace;letter-spacing:-1.16px;-webkit-text-stroke:.18px #fff;">0s</div>
<div style="left:1350.86px;top:269.8px;width:89.55px;height:18px;background:#fb6b41;"></div>
<div class="t" style="left:1195.64px;top:270px;width:400px;height:18px;margin-left:-0.03px;text-align:center;font-size:12px;line-height:18px;color:#17171a;-webkit-text-stroke:0.3px #17171a;letter-spacing:-0.05px;">ARRI S60</div>
<div style="left:1448.29px;top:223.9px;width:89.55px;height:109.8px;background:#151519;box-shadow:inset 0 0 0 1.4px #f2683f;border-radius:8px;"></div>
<div class="t" style="left:1476.17px;top:242px;height:25px;font-size:18.6px;line-height:25px;color:#fff;font-family:'Liberation Mono',monospace;letter-spacing:-1.16px;-webkit-text-stroke:.18px #fff;">109</div>
<div class="t" style="left:1481.17px;top:294px;height:25px;font-size:18.6px;line-height:25px;color:#fff;font-family:'Liberation Mono',monospace;letter-spacing:-1.16px;-webkit-text-stroke:.18px #fff;">0s</div>
<div style="left:1448.29px;top:269.8px;width:89.55px;height:18px;background:#fb6b41;"></div>
<div class="t" style="left:1293.07px;top:270px;width:400px;height:18px;margin-left:-0.03px;text-align:center;font-size:12px;line-height:18px;color:#17171a;-webkit-text-stroke:0.3px #17171a;letter-spacing:-0.05px;">ARRI S60</div>
<div style="left:1545.72px;top:223.9px;width:89.55px;height:109.8px;background:#151519;box-shadow:inset 0 0 0 1.4px #f2683f;border-radius:8px;"></div>
<div class="t" style="left:1573.6px;top:242px;height:25px;font-size:18.6px;line-height:25px;color:#fff;font-family:'Liberation Mono',monospace;letter-spacing:-1.16px;-webkit-text-stroke:.18px #fff;">110</div>
<div class="t" style="left:1578.6px;top:294px;height:25px;font-size:18.6px;line-height:25px;color:#fff;font-family:'Liberation Mono',monospace;letter-spacing:-1.16px;-webkit-text-stroke:.18px #fff;">0s</div>
<div style="left:1545.72px;top:269.8px;width:89.55px;height:18px;background:#fb6b41;"></div>
<div class="t" style="left:1390.5px;top:270px;width:400px;height:18px;margin-left:-0.03px;text-align:center;font-size:12px;line-height:18px;color:#17171a;-webkit-text-stroke:0.3px #17171a;letter-spacing:-0.05px;">ARRI S60</div>
<div style="left:1615.67px;top:229.1px;width:14.3px;height:14px;background:#ef4444;border-radius:3.5px;"></div>
<div class="t" style="left:1422.82px;top:228px;width:400px;height:16px;margin-left:0px;text-align:center;font-size:11px;line-height:16px;color:#121214;font-weight:bold;-webkit-text-stroke:0.25px #121214;">D</div>
<div style="left:766.28px;top:345.95px;width:89.55px;height:109.8px;border:1px solid #7c3aed;"></div>
<div style="left:863.71px;top:345.95px;width:89.55px;height:109.8px;border:1px solid #7c3aed;"></div>
<div style="left:668.85px;top:345.95px;width:89.55px;height:109.8px;background:#151519;box-shadow:inset 0 0 0 1.4px #f2683f;border-radius:8px;"></div>
<div class="t" style="left:696.73px;top:364px;height:25px;font-size:18.6px;line-height:25px;color:#fff;font-family:'Liberation Mono',monospace;letter-spacing:-1.16px;-webkit-text-stroke:.18px #fff;">201</div>
<div class="t" style="left:701.73px;top:416px;height:25px;font-size:18.6px;line-height:25px;color:#fff;font-family:'Liberation Mono',monospace;letter-spacing:-1.16px;-webkit-text-stroke:.18px #fff;">0s</div>
<div style="left:668.85px;top:391.85px;width:89.55px;height:18px;background:#fb6b41;"></div>
<div class="t" style="left:513.62px;top:392px;width:400px;height:18px;margin-left:0.36px;text-align:center;font-size:12px;line-height:18px;color:#17171a;-webkit-text-stroke:0.3px #17171a;letter-spacing:0.72px;">Astera Titan</div>
<div style="left:738.8px;top:351.15px;width:14.3px;height:14px;background:#ef4444;border-radius:3.5px;"></div>
<div class="t" style="left:545.95px;top:350px;width:400px;height:16px;margin-left:0px;text-align:center;font-size:11px;line-height:16px;color:#121214;font-weight:bold;-webkit-text-stroke:0.25px #121214;">D</div>
<div style="left:766.28px;top:345.95px;width:89.55px;height:109.8px;background:#151519;box-shadow:inset 0 0 0 1.4px #f2683f;border-radius:8px;"></div>
<div class="t" style="left:794.15px;top:364px;height:25px;font-size:18.6px;line-height:25px;color:#fff;font-family:'Liberation Mono',monospace;letter-spacing:-1.16px;-webkit-text-stroke:.18px #fff;">202</div>
<div class="t" style="left:794.15px;top:416px;height:25px;font-size:18.6px;line-height:25px;color:#f04646;font-family:'Liberation Mono',monospace;letter-spacing:-1.16px;-webkit-text-stroke:.18px #f04646;">20s</div>
<div style="left:766.28px;top:391.85px;width:89.55px;height:18px;background:#fb6b41;"></div>
<div class="t" style="left:611.05px;top:392px;width:400px;height:18px;margin-left:0.36px;text-align:center;font-size:12px;line-height:18px;color:#17171a;-webkit-text-stroke:0.3px #17171a;letter-spacing:0.72px;">Astera Titan</div>
<div style="left:820.13px;top:351.15px;width:14.3px;height:14px;background:#ef4444;border-radius:3.5px;"></div>
<div class="t" style="left:627.28px;top:350px;width:400px;height:16px;margin-left:0px;text-align:center;font-size:11px;line-height:16px;color:#121214;font-weight:bold;-webkit-text-stroke:0.25px #121214;">F</div>
<div style="left:863.71px;top:345.95px;width:89.55px;height:109.8px;background:linear-gradient(162deg,#3b9cf2 0%,#5cb0f4 35%,#cfe6fb 72%,#ffffff 100%);border-radius:8.5px;"></div>
<div style="left:865.71px;top:347.95px;width:85.55px;height:105.8px;background:linear-gradient(140deg,#1e3856 0%,#2f4256 40%,#4a4e58 80%,#5a595c 100%);border-radius:6.5px;"></div>
<div class="t" style="left:891.59px;top:364px;height:25px;font-size:18.6px;line-height:25px;color:#fff;font-family:'Liberation Mono',monospace;letter-spacing:-1.16px;-webkit-text-stroke:.18px #fff;">203</div>
<div class="t" style="left:896.59px;top:416px;height:25px;font-size:18.6px;line-height:25px;color:#fff;font-family:'Liberation Mono',monospace;letter-spacing:-1.16px;-webkit-text-stroke:.18px #fff;">0s</div>
<div style="left:884.51px;top:399.95px;width:48.75px;height:2px;background:linear-gradient(90deg,#2b8cf0,#7cc0f8 45%,#fff 80%);border-radius:1px;"></div>
<svg style="position:absolute;left:868.91px;top:350.95px;" width="14" height="14" viewBox="0 0 14 14"><g fill="none" stroke="#8cc4f4" stroke-width="1" stroke-linecap="round"><path d="M7 .6v12.8M1.5 3.8l11 6.4M12.5 3.8l-11 6.4"/><path d="M5.3 1.6 7 3.2l1.7-1.6M5.3 12.4 7 10.8l1.7 1.6M1.2 6.3l2.3-.6-.6-2.3M12.8 7.7l-2.3.6.6 2.3M12.8 6.3l-2.3-.6.6-2.3M1.2 7.7l2.3.6-.6 2.3"/></g></svg>
<div style="left:961.14px;top:345.95px;width:89.55px;height:109.8px;background:linear-gradient(180deg,#2c9a3c 0%,#4cb45a 40%,#8edc9c 80%,#b4f4c0 100%);border-radius:8.5px;"></div>
<div style="left:963.14px;top:347.95px;width:85.55px;height:105.8px;background:linear-gradient(175deg,#1c3223 0%,#25392a 35%,#36463a 80%,#3f4d41 100%);border-radius:6.5px;"></div>
<div class="t" style="left:989.02px;top:364px;height:25px;font-size:18.6px;line-height:25px;color:#fff;font-family:'Liberation Mono',monospace;letter-spacing:-1.16px;-webkit-text-stroke:.18px #fff;">204</div>
<div class="t" style="left:994.02px;top:416px;height:25px;font-size:18.6px;line-height:25px;color:#fff;font-family:'Liberation Mono',monospace;letter-spacing:-1.16px;-webkit-text-stroke:.18px #fff;">0s</div>
<div style="left:981.94px;top:399.95px;width:48.75px;height:2px;background:#3ec04c;border-radius:1px;"></div>
<svg style="position:absolute;left:967.14px;top:350.75px;" width="12" height="14.6" viewBox="0 0 12 14.6"><path d="M6 0 9.6 4.8H8.2l3 4.2H9.4l2.6 3.6H7.1V14.6H4.9V12.6H0L2.6 9H.8l3-4.2H2.4z" fill="#22c55e"/></svg>
<div style="left:1031.09px;top:351.15px;width:14.3px;height:14px;background:#ef4444;border-radius:3.5px;"></div>
<div class="t" style="left:838.24px;top:350px;width:400px;height:16px;margin-left:0px;text-align:center;font-size:11px;line-height:16px;color:#121214;font-weight:bold;-webkit-text-stroke:0.25px #121214;">D</div>
<div style="left:1014.99px;top:351.15px;width:14.3px;height:14px;background:#ef4444;border-radius:3.5px;"></div>
<div class="t" style="left:822.14px;top:350px;width:400px;height:16px;margin-left:0px;text-align:center;font-size:11px;line-height:16px;color:#121214;font-weight:bold;-webkit-text-stroke:0.25px #121214;">F</div>
<div style="left:1026.19px;top:436.75px;width:19.2px;height:14px;background:#eab308;border-radius:3.5px;"></div>
<div class="t" style="left:835.79px;top:436px;width:400px;height:16px;margin-left:0px;text-align:center;font-size:11px;line-height:16px;color:#121214;font-weight:bold;-webkit-text-stroke:0.25px #121214;">E1</div>
<div style="left:1058.57px;top:345.95px;width:89.55px;height:109.8px;background:linear-gradient(162deg,#3b9cf2 0%,#5cb0f4 35%,#cfe6fb 72%,#ffffff 100%);border-radius:8.5px;"></div>
<div style="left:1060.57px;top:347.95px;width:85.55px;height:105.8px;background:linear-gradient(140deg,#1e3856 0%,#2f4256 40%,#4a4e58 80%,#5a595c 100%);border-radius:6.5px;"></div>
<div class="t" style="left:1086.45px;top:364px;height:25px;font-size:18.6px;line-height:25px;color:#fff;font-family:'Liberation Mono',monospace;letter-spacing:-1.16px;-webkit-text-stroke:.18px #fff;">205</div>
<div class="t" style="left:1091.45px;top:416px;height:25px;font-size:18.6px;line-height:25px;color:#fff;font-family:'Liberation Mono',monospace;letter-spacing:-1.16px;-webkit-text-stroke:.18px #fff;">0s</div>
<div style="left:1079.37px;top:399.95px;width:48.75px;height:2px;background:linear-gradient(90deg,#2b8cf0,#7cc0f8 45%,#fff 80%);border-radius:1px;"></div>
<svg style="position:absolute;left:1063.77px;top:350.95px;" width="14" height="14" viewBox="0 0 14 14"><g fill="none" stroke="#8cc4f4" stroke-width="1" stroke-linecap="round"><path d="M7 .6v12.8M1.5 3.8l11 6.4M12.5 3.8l-11 6.4"/><path d="M5.3 1.6 7 3.2l1.7-1.6M5.3 12.4 7 10.8l1.7 1.6M1.2 6.3l2.3-.6-.6-2.3M12.8 7.7l-2.3.6.6 2.3M12.8 6.3l-2.3-.6.6-2.3M1.2 7.7l2.3.6-.6 2.3"/></g></svg>
<div style="left:1156px;top:345.95px;width:89.55px;height:109.8px;background:linear-gradient(162deg,#3b9cf2 0%,#5cb0f4 35%,#cfe6fb 72%,#ffffff 100%);border-radius:8.5px;"></div>
<div style="left:1158px;top:347.95px;width:85.55px;height:105.8px;background:linear-gradient(140deg,#1e3856 0%,#2f4256 40%,#4a4e58 80%,#5a595c 100%);border-radius:6.5px;"></div>
<div class="t" style="left:1183.88px;top:364px;height:25px;font-size:18.6px;line-height:25px;color:#fff;font-family:'Liberation Mono',monospace;letter-spacing:-1.16px;-webkit-text-stroke:.18px #fff;">206</div>
<div class="t" style="left:1188.88px;top:416px;height:25px;font-size:18.6px;line-height:25px;color:#fff;font-family:'Liberation Mono',monospace;letter-spacing:-1.16px;-webkit-text-stroke:.18px #fff;">0s</div>
<div style="left:1176.8px;top:399.95px;width:48.75px;height:2px;background:linear-gradient(90deg,#2b8cf0,#7cc0f8 45%,#fff 80%);border-radius:1px;"></div>
<svg style="position:absolute;left:1161.2px;top:350.95px;" width="14" height="14" viewBox="0 0 14 14"><g fill="none" stroke="#8cc4f4" stroke-width="1" stroke-linecap="round"><path d="M7 .6v12.8M1.5 3.8l11 6.4M12.5 3.8l-11 6.4"/><path d="M5.3 1.6 7 3.2l1.7-1.6M5.3 12.4 7 10.8l1.7 1.6M1.2 6.3l2.3-.6-.6-2.3M12.8 7.7l-2.3.6.6 2.3M12.8 6.3l-2.3-.6.6-2.3M1.2 7.7l2.3.6-.6 2.3"/></g></svg>
<div style="left:1253.43px;top:345.95px;width:89.55px;height:109.8px;background:linear-gradient(162deg,#3b9cf2 0%,#5cb0f4 35%,#cfe6fb 72%,#ffffff 100%);border-radius:8.5px;"></div>
<div style="left:1255.43px;top:347.95px;width:85.55px;height:105.8px;background:linear-gradient(140deg,#1e3856 0%,#2f4256 40%,#4a4e58 80%,#5a595c 100%);border-radius:6.5px;"></div>
<div class="t" style="left:1281.31px;top:364px;height:25px;font-size:18.6px;line-height:25px;color:#fff;font-family:'Liberation Mono',monospace;letter-spacing:-1.16px;-webkit-text-stroke:.18px #fff;">208</div>
<div class="t" style="left:1286.31px;top:416px;height:25px;font-size:18.6px;line-height:25px;color:#fff;font-family:'Liberation Mono',monospace;letter-spacing:-1.16px;-webkit-text-stroke:.18px #fff;">0s</div>
<div style="left:1274.23px;top:399.95px;width:48.75px;height:2px;background:linear-gradient(90deg,#2b8cf0,#7cc0f8 45%,#fff 80%);border-radius:1px;"></div>
<svg style="position:absolute;left:1258.63px;top:350.95px;" width="14" height="14" viewBox="0 0 14 14"><g fill="none" stroke="#8cc4f4" stroke-width="1" stroke-linecap="round"><path d="M7 .6v12.8M1.5 3.8l11 6.4M12.5 3.8l-11 6.4"/><path d="M5.3 1.6 7 3.2l1.7-1.6M5.3 12.4 7 10.8l1.7 1.6M1.2 6.3l2.3-.6-.6-2.3M12.8 7.7l-2.3.6.6 2.3M12.8 6.3l-2.3-.6.6-2.3M1.2 7.7l2.3.6-.6 2.3"/></g></svg>
<div style="left:1350.86px;top:345.95px;width:89.55px;height:109.8px;background:linear-gradient(162deg,#3b9cf2 0%,#5cb0f4 35%,#cfe6fb 72%,#ffffff 100%);border-radius:8.5px;"></div>
<div style="left:1352.86px;top:347.95px;width:85.55px;height:105.8px;background:linear-gradient(140deg,#1e3856 0%,#2f4256 40%,#4a4e58 80%,#5a595c 100%);border-radius:6.5px;"></div>
<div class="t" style="left:1378.74px;top:364px;height:25px;font-size:18.6px;line-height:25px;color:#fff;font-family:'Liberation Mono',monospace;letter-spacing:-1.16px;-webkit-text-stroke:.18px #fff;">207</div>
<div class="t" style="left:1383.74px;top:416px;height:25px;font-size:18.6px;line-height:25px;color:#f04646;font-family:'Liberation Mono',monospace;letter-spacing:-1.16px;-webkit-text-stroke:.18px #f04646;">0s</div>
<div style="left:1371.66px;top:399.95px;width:48.75px;height:2px;background:linear-gradient(90deg,#2b8cf0,#7cc0f8 45%,#fff 80%);border-radius:1px;"></div>
<svg style="position:absolute;left:1356.06px;top:350.95px;" width="14" height="14" viewBox="0 0 14 14"><g fill="none" stroke="#8cc4f4" stroke-width="1" stroke-linecap="round"><path d="M7 .6v12.8M1.5 3.8l11 6.4M12.5 3.8l-11 6.4"/><path d="M5.3 1.6 7 3.2l1.7-1.6M5.3 12.4 7 10.8l1.7 1.6M1.2 6.3l2.3-.6-.6-2.3M12.8 7.7l-2.3.6.6 2.3M12.8 6.3l-2.3-.6.6-2.3M1.2 7.7l2.3.6-.6 2.3"/></g></svg>
<div style="left:1448.29px;top:345.95px;width:89.55px;height:109.8px;background:linear-gradient(162deg,#3b9cf2 0%,#5cb0f4 35%,#cfe6fb 72%,#ffffff 100%);border-radius:8.5px;"></div>
<div style="left:1450.29px;top:347.95px;width:85.55px;height:105.8px;background:linear-gradient(140deg,#1e3856 0%,#2f4256 40%,#4a4e58 80%,#5a595c 100%);border-radius:6.5px;"></div>
<div class="t" style="left:1476.17px;top:364px;height:25px;font-size:18.6px;line-height:25px;color:#fff;font-family:'Liberation Mono',monospace;letter-spacing:-1.16px;-webkit-text-stroke:.18px #fff;">301</div>
<div class="t" style="left:1481.17px;top:416px;height:25px;font-size:18.6px;line-height:25px;color:#fff;font-family:'Liberation Mono',monospace;letter-spacing:-1.16px;-webkit-text-stroke:.18px #fff;">0s</div>
<div style="left:1469.09px;top:399.95px;width:48.75px;height:2px;background:linear-gradient(90deg,#2b8cf0,#7cc0f8 45%,#fff 80%);border-radius:1px;"></div>
<svg style="position:absolute;left:1453.49px;top:350.95px;" width="14" height="14" viewBox="0 0 14 14"><g fill="none" stroke="#8cc4f4" stroke-width="1" stroke-linecap="round"><path d="M7 .6v12.8M1.5 3.8l11 6.4M12.5 3.8l-11 6.4"/><path d="M5.3 1.6 7 3.2l1.7-1.6M5.3 12.4 7 10.8l1.7 1.6M1.2 6.3l2.3-.6-.6-2.3M12.8 7.7l-2.3.6.6 2.3M12.8 6.3l-2.3-.6.6-2.3M1.2 7.7l2.3.6-.6 2.3"/></g></svg>
<div style="left:1545.72px;top:345.95px;width:89.55px;height:109.8px;background:linear-gradient(162deg,#3b9cf2 0%,#5cb0f4 35%,#cfe6fb 72%,#ffffff 100%);border-radius:8.5px;"></div>
<div style="left:1547.72px;top:347.95px;width:85.55px;height:105.8px;background:linear-gradient(140deg,#1e3856 0%,#2f4256 40%,#4a4e58 80%,#5a595c 100%);border-radius:6.5px;"></div>
<div class="t" style="left:1573.6px;top:364px;height:25px;font-size:18.6px;line-height:25px;color:#fff;font-family:'Liberation Mono',monospace;letter-spacing:-1.16px;-webkit-text-stroke:.18px #fff;">302</div>
<div class="t" style="left:1578.6px;top:416px;height:25px;font-size:18.6px;line-height:25px;color:#fff;font-family:'Liberation Mono',monospace;letter-spacing:-1.16px;-webkit-text-stroke:.18px #fff;">0s</div>
<div style="left:1566.52px;top:399.95px;width:48.75px;height:2px;background:linear-gradient(90deg,#2b8cf0,#7cc0f8 45%,#fff 80%);border-radius:1px;"></div>
<svg style="position:absolute;left:1550.92px;top:350.95px;" width="14" height="14" viewBox="0 0 14 14"><g fill="none" stroke="#8cc4f4" stroke-width="1" stroke-linecap="round"><path d="M7 .6v12.8M1.5 3.8l11 6.4M12.5 3.8l-11 6.4"/><path d="M5.3 1.6 7 3.2l1.7-1.6M5.3 12.4 7 10.8l1.7 1.6M1.2 6.3l2.3-.6-.6-2.3M12.8 7.7l-2.3.6.6 2.3M12.8 6.3l-2.3-.6.6-2.3M1.2 7.7l2.3.6-.6 2.3"/></g></svg>
<div style="left:668.85px;top:468px;width:89.55px;height:109.8px;background:#151519;box-shadow:inset 0 0 0 1.35px #4a4af2;border-radius:8px;"></div>
<div class="t" style="left:701.73px;top:486px;height:25px;font-size:18.6px;line-height:25px;color:#fff;font-family:'Liberation Mono',monospace;letter-spacing:-1.16px;-webkit-text-stroke:.18px #fff;">0s</div>
<div class="t" style="left:701.73px;top:538px;height:25px;font-size:18.6px;line-height:25px;color:#fff;font-family:'Liberation Mono',monospace;letter-spacing:-1.16px;-webkit-text-stroke:.18px #fff;">55</div>
<div style="left:689.85px;top:522px;width:48.15px;height:2px;background:#38383e;border-radius:1px;"></div>
<div style="left:766.28px;top:468px;width:89.55px;height:109.8px;background:#151519;box-shadow:inset 0 0 0 1.35px #4a4af2;border-radius:8px;"></div>
<div class="t" style="left:794.15px;top:486px;height:25px;font-size:18.6px;line-height:25px;color:#fff;font-family:'Liberation Mono',monospace;letter-spacing:-1.16px;-webkit-text-stroke:.18px #fff;">304</div>
<div class="t" style="left:799.15px;top:538px;height:25px;font-size:18.6px;line-height:25px;color:#fff;font-family:'Liberation Mono',monospace;letter-spacing:-1.16px;-webkit-text-stroke:.18px #fff;">0s</div>
<div style="left:787.28px;top:522px;width:48.15px;height:2px;background:#38383e;border-radius:1px;"></div>
<div style="left:863.71px;top:468px;width:89.55px;height:109.8px;background:#151519;box-shadow:inset 0 0 0 1.35px #4a4af2;border-radius:8px;"></div>
<div class="t" style="left:891.59px;top:486px;height:25px;font-size:18.6px;line-height:25px;color:#fff;font-family:'Liberation Mono',monospace;letter-spacing:-1.16px;-webkit-text-stroke:.18px #fff;">401</div>
<div class="t" style="left:896.59px;top:538px;height:25px;font-size:18.6px;line-height:25px;color:#fff;font-family:'Liberation Mono',monospace;letter-spacing:-1.16px;-webkit-text-stroke:.18px #fff;">0s</div>
<div style="left:884.71px;top:522px;width:48.15px;height:2px;background:#38383e;border-radius:1px;"></div>
<div style="left:961.14px;top:468px;width:89.55px;height:109.8px;background:#151519;box-shadow:inset 0 0 0 1.35px #4a4af2;border-radius:8px;"></div>
<div class="t" style="left:989.02px;top:486px;height:25px;font-size:18.6px;line-height:25px;color:#fff;font-family:'Liberation Mono',monospace;letter-spacing:-1.16px;-webkit-text-stroke:.18px #fff;">402</div>
<div class="t" style="left:994.02px;top:538px;height:25px;font-size:18.6px;line-height:25px;color:#fff;font-family:'Liberation Mono',monospace;letter-spacing:-1.16px;-webkit-text-stroke:.18px #fff;">0s</div>
<div style="left:982.14px;top:522px;width:48.15px;height:2px;background:#38383e;border-radius:1px;"></div>
<div style="left:1058.57px;top:468px;width:89.55px;height:109.8px;background:#151519;box-shadow:inset 0 0 0 1.35px #4a4af2;border-radius:8px;"></div>
<div class="t" style="left:1086.45px;top:486px;height:25px;font-size:18.6px;line-height:25px;color:#fff;font-family:'Liberation Mono',monospace;letter-spacing:-1.16px;-webkit-text-stroke:.18px #fff;">405</div>
<div class="t" style="left:1091.45px;top:538px;height:25px;font-size:18.6px;line-height:25px;color:#fff;font-family:'Liberation Mono',monospace;letter-spacing:-1.16px;-webkit-text-stroke:.18px #fff;">0s</div>
<div style="left:1079.57px;top:522px;width:48.15px;height:2px;background:#38383e;border-radius:1px;"></div>
<div style="left:1156px;top:468px;width:89.55px;height:109.8px;background:#151519;box-shadow:inset 0 0 0 1.35px #627878;border-radius:8px;"></div>
<div class="t" style="left:1183.88px;top:486px;height:25px;font-size:18.6px;line-height:25px;color:#fff;font-family:'Liberation Mono',monospace;letter-spacing:-1.16px;-webkit-text-stroke:.18px #fff;">403</div>
<div class="t" style="left:1178.88px;top:538px;height:25px;font-size:18.6px;line-height:25px;color:#f04646;font-family:'Liberation Mono',monospace;letter-spacing:-1.16px;-webkit-text-stroke:.18px #f04646;">240s</div>
<div style="left:1156px;top:513.9px;width:89.55px;height:18px;background:#6f8686;"></div>
<div class="t" style="left:1000.78px;top:514px;width:400px;height:18px;margin-left:0.24px;text-align:center;font-size:12px;line-height:18px;color:#fff;-webkit-text-stroke:0.3px #fff;letter-spacing:0.48px;">Kino Freestyle</div>
<div style="left:1225.95px;top:473.2px;width:14.3px;height:14px;background:#ef4444;border-radius:3.5px;"></div>
<div class="t" style="left:1033.1px;top:472px;width:400px;height:16px;margin-left:0px;text-align:center;font-size:11px;line-height:16px;color:#121214;font-weight:bold;-webkit-text-stroke:0.25px #121214;">D</div>
<div style="left:1209.85px;top:473.2px;width:14.3px;height:14px;background:#ef4444;border-radius:3.5px;"></div>
<div class="t" style="left:1017px;top:472px;width:400px;height:16px;margin-left:0px;text-align:center;font-size:11px;line-height:16px;color:#121214;font-weight:bold;-webkit-text-stroke:0.25px #121214;">F</div>
<div style="left:1253.43px;top:468px;width:89.55px;height:109.8px;background:#151519;box-shadow:inset 0 0 0 1.35px #627878;border-radius:8px;"></div>
<div class="t" style="left:1281.31px;top:486px;height:25px;font-size:18.6px;line-height:25px;color:#fff;font-family:'Liberation Mono',monospace;letter-spacing:-1.16px;-webkit-text-stroke:.18px #fff;">404</div>
<div class="t" style="left:1276.31px;top:538px;height:25px;font-size:18.6px;line-height:25px;color:#f04646;font-family:'Liberation Mono',monospace;letter-spacing:-1.16px;-webkit-text-stroke:.18px #f04646;">240s</div>
<div style="left:1253.43px;top:513.9px;width:89.55px;height:18px;background:#6f8686;"></div>
<div class="t" style="left:1098.2px;top:514px;width:400px;height:18px;margin-left:0.24px;text-align:center;font-size:12px;line-height:18px;color:#fff;-webkit-text-stroke:0.3px #fff;letter-spacing:0.48px;">Kino Freestyle</div>
<div style="left:1323.38px;top:473.2px;width:14.3px;height:14px;background:#ef4444;border-radius:3.5px;"></div>
<div class="t" style="left:1130.53px;top:472px;width:400px;height:16px;margin-left:0px;text-align:center;font-size:11px;line-height:16px;color:#121214;font-weight:bold;-webkit-text-stroke:0.25px #121214;">D</div>
<div style="left:1307.28px;top:473.2px;width:14.3px;height:14px;background:#ef4444;border-radius:3.5px;"></div>
<div class="t" style="left:1114.43px;top:472px;width:400px;height:16px;margin-left:0px;text-align:center;font-size:11px;line-height:16px;color:#121214;font-weight:bold;-webkit-text-stroke:0.25px #121214;">F</div>
<div style="left:1350.86px;top:468px;width:89.55px;height:109.8px;background:#151519;box-shadow:inset 0 0 0 1.35px #627878;border-radius:8px;"></div>
<div class="t" style="left:1378.74px;top:486px;height:25px;font-size:18.6px;line-height:25px;color:#fff;font-family:'Liberation Mono',monospace;letter-spacing:-1.16px;-webkit-text-stroke:.18px #fff;">901</div>
<div class="t" style="left:1373.74px;top:538px;height:25px;font-size:18.6px;line-height:25px;color:#f04646;font-family:'Liberation Mono',monospace;letter-spacing:-1.16px;-webkit-text-stroke:.18px #f04646;">240s</div>
<div style="left:1350.86px;top:513.9px;width:89.55px;height:18px;background:#6f8686;"></div>
<div class="t" style="left:1195.64px;top:514px;width:400px;height:18px;margin-left:-0.03px;text-align:center;font-size:12px;line-height:18px;color:#fff;-webkit-text-stroke:0.3px #fff;letter-spacing:-0.05px;">ARRI S60</div>
<div style="left:1420.81px;top:473.2px;width:14.3px;height:14px;background:#ef4444;border-radius:3.5px;"></div>
<div class="t" style="left:1227.96px;top:472px;width:400px;height:16px;margin-left:0px;text-align:center;font-size:11px;line-height:16px;color:#121214;font-weight:bold;-webkit-text-stroke:0.25px #121214;">D</div>
<div style="left:1404.71px;top:473.2px;width:14.3px;height:14px;background:#ef4444;border-radius:3.5px;"></div>
<div class="t" style="left:1211.86px;top:472px;width:400px;height:16px;margin-left:0px;text-align:center;font-size:11px;line-height:16px;color:#121214;font-weight:bold;-webkit-text-stroke:0.25px #121214;">F</div>
<div style="left:1448.29px;top:468px;width:89.55px;height:109.8px;background:#151519;box-shadow:inset 0 0 0 1.35px #4a4af2;border-radius:8px;"></div>
<div class="t" style="left:1476.17px;top:486px;height:25px;font-size:18.6px;line-height:25px;color:#fff;font-family:'Liberation Mono',monospace;letter-spacing:-1.16px;-webkit-text-stroke:.18px #fff;">902</div>
<div class="t" style="left:1481.17px;top:538px;height:25px;font-size:18.6px;line-height:25px;color:#fff;font-family:'Liberation Mono',monospace;letter-spacing:-1.16px;-webkit-text-stroke:.18px #fff;">0s</div>
<div style="left:1469.29px;top:522px;width:48.15px;height:2px;background:#38383e;border-radius:1px;"></div>
<div style="left:1545.72px;top:468px;width:89.55px;height:109.8px;background:#151519;box-shadow:inset 0 0 0 1.35px #4a4af2;border-radius:8px;"></div>
<div class="t" style="left:1573.6px;top:486px;height:25px;font-size:18.6px;line-height:25px;color:#fff;font-family:'Liberation Mono',monospace;letter-spacing:-1.16px;-webkit-text-stroke:.18px #fff;">903</div>
<div class="t" style="left:1578.6px;top:538px;height:25px;font-size:18.6px;line-height:25px;color:#fff;font-family:'Liberation Mono',monospace;letter-spacing:-1.16px;-webkit-text-stroke:.18px #fff;">0s</div>
<div style="left:1566.72px;top:522px;width:48.15px;height:2px;background:#38383e;border-radius:1px;"></div>
<div style="left:668.85px;top:590.05px;width:89.55px;height:109.8px;background:#151519;box-shadow:inset 0 0 0 1.35px #4a4af2;border-radius:8px;"></div>
<div class="t" style="left:701.73px;top:609px;height:25px;font-size:18.6px;line-height:25px;color:#fff;font-family:'Liberation Mono',monospace;letter-spacing:-1.16px;-webkit-text-stroke:.18px #fff;">0s</div>
<div class="t" style="left:701.73px;top:661px;height:25px;font-size:18.6px;line-height:25px;color:#fff;font-family:'Liberation Mono',monospace;letter-spacing:-1.16px;-webkit-text-stroke:.18px #fff;">25</div>
<div style="left:689.85px;top:644.05px;width:48.15px;height:2px;background:#38383e;border-radius:1px;"></div>
<div style="left:766.28px;top:590.05px;width:89.55px;height:109.8px;background:#151519;box-shadow:inset 0 0 0 1.35px #c81aa0;border-radius:8px;"></div>
<div class="t" style="left:794.15px;top:609px;height:25px;font-size:18.6px;line-height:25px;color:#fff;font-family:'Liberation Mono',monospace;letter-spacing:-1.16px;-webkit-text-stroke:.18px #fff;">905</div>
<div class="t" style="left:794.15px;top:661px;height:25px;font-size:18.6px;line-height:25px;color:#f04646;font-family:'Liberation Mono',monospace;letter-spacing:-1.16px;-webkit-text-stroke:.18px #f04646;">80s</div>
<div style="left:766.28px;top:635.95px;width:89.55px;height:18px;background:#c6199f;"></div>
<div class="t" style="left:611.05px;top:636px;width:400px;height:18px;margin-left:-0.03px;text-align:center;font-size:12px;line-height:18px;color:#fff;-webkit-text-stroke:0.3px #fff;letter-spacing:-0.05px;">ARRI S60</div>
<div style="left:836.23px;top:595.25px;width:14.3px;height:14px;background:#ef4444;border-radius:3.5px;"></div>
<div class="t" style="left:643.38px;top:594px;width:400px;height:16px;margin-left:0px;text-align:center;font-size:11px;line-height:16px;color:#121214;font-weight:bold;-webkit-text-stroke:0.25px #121214;">D</div>
<div style="left:820.13px;top:595.25px;width:14.3px;height:14px;background:#ef4444;border-radius:3.5px;"></div>
<div class="t" style="left:627.28px;top:594px;width:400px;height:16px;margin-left:0px;text-align:center;font-size:11px;line-height:16px;color:#121214;font-weight:bold;-webkit-text-stroke:0.25px #121214;">F</div>
<div style="left:863.71px;top:590.05px;width:89.55px;height:109.8px;background:#151519;box-shadow:inset 0 0 0 1.35px #c81aa0;border-radius:8px;"></div>
<div class="t" style="left:891.59px;top:609px;height:25px;font-size:18.6px;line-height:25px;color:#fff;font-family:'Liberation Mono',monospace;letter-spacing:-1.16px;-webkit-text-stroke:.18px #fff;">909</div>
<div class="t" style="left:891.59px;top:661px;height:25px;font-size:18.6px;line-height:25px;color:#f04646;font-family:'Liberation Mono',monospace;letter-spacing:-1.16px;-webkit-text-stroke:.18px #f04646;">80s</div>
<div style="left:863.71px;top:635.95px;width:89.55px;height:18px;background:#c6199f;"></div>
<div class="t" style="left:708.49px;top:636px;width:400px;height:18px;margin-left:-0.03px;text-align:center;font-size:12px;line-height:18px;color:#fff;-webkit-text-stroke:0.3px #fff;letter-spacing:-0.05px;">ARRI S60</div>
<div style="left:933.66px;top:595.25px;width:14.3px;height:14px;background:#ef4444;border-radius:3.5px;"></div>
<div class="t" style="left:740.81px;top:594px;width:400px;height:16px;margin-left:0px;text-align:center;font-size:11px;line-height:16px;color:#121214;font-weight:bold;-webkit-text-stroke:0.25px #121214;">D</div>
<div style="left:917.56px;top:595.25px;width:14.3px;height:14px;background:#ef4444;border-radius:3.5px;"></div>
<div class="t" style="left:724.71px;top:594px;width:400px;height:16px;margin-left:0px;text-align:center;font-size:11px;line-height:16px;color:#121214;font-weight:bold;-webkit-text-stroke:0.25px #121214;">F</div>
<div style="left:961.14px;top:590.05px;width:89.55px;height:109.8px;background:#151519;box-shadow:inset 0 0 0 1.35px #4a4af2;border-radius:8px;"></div>
<div class="t" style="left:989.02px;top:609px;height:25px;font-size:18.6px;line-height:25px;color:#fff;font-family:'Liberation Mono',monospace;letter-spacing:-1.16px;-webkit-text-stroke:.18px #fff;">906</div>
<div class="t" style="left:994.02px;top:661px;height:25px;font-size:18.6px;line-height:25px;color:#fff;font-family:'Liberation Mono',monospace;letter-spacing:-1.16px;-webkit-text-stroke:.18px #fff;">0s</div>
<div style="left:982.14px;top:644.05px;width:48.15px;height:2px;background:#38383e;border-radius:1px;"></div>
<div style="left:1058.57px;top:590.05px;width:89.55px;height:109.8px;background:#151519;box-shadow:inset 0 0 0 1.35px #4a4af2;border-radius:8px;"></div>
<div class="t" style="left:1086.45px;top:609px;height:25px;font-size:18.6px;line-height:25px;color:#fff;font-family:'Liberation Mono',monospace;letter-spacing:-1.16px;-webkit-text-stroke:.18px #fff;">907</div>
<div class="t" style="left:1091.45px;top:661px;height:25px;font-size:18.6px;line-height:25px;color:#fff;font-family:'Liberation Mono',monospace;letter-spacing:-1.16px;-webkit-text-stroke:.18px #fff;">0s</div>
<div style="left:1079.57px;top:644.05px;width:48.15px;height:2px;background:#38383e;border-radius:1px;"></div>
<div style="left:1156px;top:590.05px;width:89.55px;height:109.8px;background:linear-gradient(180deg,#2c9a3c 0%,#4cb45a 40%,#8edc9c 80%,#b4f4c0 100%);border-radius:8.5px;"></div>
<div style="left:1158px;top:592.05px;width:85.55px;height:105.8px;background:linear-gradient(175deg,#1c3223 0%,#25392a 35%,#36463a 80%,#3f4d41 100%);border-radius:6.5px;"></div>
<div class="t" style="left:1183.88px;top:609px;height:25px;font-size:18.6px;line-height:25px;color:#fff;font-family:'Liberation Mono',monospace;letter-spacing:-1.16px;-webkit-text-stroke:.18px #fff;">908</div>
<div class="t" style="left:1188.88px;top:661px;height:25px;font-size:18.6px;line-height:25px;color:#fff;font-family:'Liberation Mono',monospace;letter-spacing:-1.16px;-webkit-text-stroke:.18px #fff;">0s</div>
<div style="left:1176.8px;top:644.05px;width:48.75px;height:2px;background:#3ec04c;border-radius:1px;"></div>
<svg style="position:absolute;left:1162px;top:594.85px;" width="12" height="14.6" viewBox="0 0 12 14.6"><path d="M6 0 9.6 4.8H8.2l3 4.2H9.4l2.6 3.6H7.1V14.6H4.9V12.6H0L2.6 9H.8l3-4.2H2.4z" fill="#22c55e"/></svg>
<div style="left:1253.43px;top:590.05px;width:89.55px;height:109.8px;background:linear-gradient(180deg,#2c9a3c 0%,#4cb45a 40%,#8edc9c 80%,#b4f4c0 100%);border-radius:8.5px;"></div>
<div style="left:1255.43px;top:592.05px;width:85.55px;height:105.8px;background:linear-gradient(175deg,#1c3223 0%,#25392a 35%,#36463a 80%,#3f4d41 100%);border-radius:6.5px;"></div>
<div class="t" style="left:1281.31px;top:609px;height:25px;font-size:18.6px;line-height:25px;color:#fff;font-family:'Liberation Mono',monospace;letter-spacing:-1.16px;-webkit-text-stroke:.18px #fff;">910</div>
<div class="t" style="left:1286.31px;top:661px;height:25px;font-size:18.6px;line-height:25px;color:#fff;font-family:'Liberation Mono',monospace;letter-spacing:-1.16px;-webkit-text-stroke:.18px #fff;">0s</div>
<div style="left:1274.23px;top:644.05px;width:48.75px;height:2px;background:#3ec04c;border-radius:1px;"></div>
<svg style="position:absolute;left:1259.43px;top:594.85px;" width="12" height="14.6" viewBox="0 0 12 14.6"><path d="M6 0 9.6 4.8H8.2l3 4.2H9.4l2.6 3.6H7.1V14.6H4.9V12.6H0L2.6 9H.8l3-4.2H2.4z" fill="#22c55e"/></svg>
<div style="left:1350.86px;top:590.05px;width:89.55px;height:109.8px;background:linear-gradient(180deg,#2c9a3c 0%,#4cb45a 40%,#8edc9c 80%,#b4f4c0 100%);border-radius:8.5px;"></div>
<div style="left:1352.86px;top:592.05px;width:85.55px;height:105.8px;background:linear-gradient(175deg,#1c3223 0%,#25392a 35%,#36463a 80%,#3f4d41 100%);border-radius:6.5px;"></div>
<div class="t" style="left:1378.74px;top:609px;height:25px;font-size:18.6px;line-height:25px;color:#fff;font-family:'Liberation Mono',monospace;letter-spacing:-1.16px;-webkit-text-stroke:.18px #fff;">131</div>
<div class="t" style="left:1383.74px;top:661px;height:25px;font-size:18.6px;line-height:25px;color:#fff;font-family:'Liberation Mono',monospace;letter-spacing:-1.16px;-webkit-text-stroke:.18px #fff;">0s</div>
<div style="left:1371.66px;top:644.05px;width:48.75px;height:2px;background:#3ec04c;border-radius:1px;"></div>
<svg style="position:absolute;left:1356.86px;top:594.85px;" width="12" height="14.6" viewBox="0 0 12 14.6"><path d="M6 0 9.6 4.8H8.2l3 4.2H9.4l2.6 3.6H7.1V14.6H4.9V12.6H0L2.6 9H.8l3-4.2H2.4z" fill="#22c55e"/></svg>
<div style="left:1448.29px;top:590.05px;width:89.55px;height:109.8px;background:linear-gradient(180deg,#2c9a3c 0%,#4cb45a 40%,#8edc9c 80%,#b4f4c0 100%);border-radius:8.5px;"></div>
<div style="left:1450.29px;top:592.05px;width:85.55px;height:105.8px;background:linear-gradient(175deg,#1c3223 0%,#25392a 35%,#36463a 80%,#3f4d41 100%);border-radius:6.5px;"></div>
<div class="t" style="left:1476.17px;top:609px;height:25px;font-size:18.6px;line-height:25px;color:#fff;font-family:'Liberation Mono',monospace;letter-spacing:-1.16px;-webkit-text-stroke:.18px #fff;">131</div>
<div class="t" style="left:1481.17px;top:661px;height:25px;font-size:18.6px;line-height:25px;color:#fff;font-family:'Liberation Mono',monospace;letter-spacing:-1.16px;-webkit-text-stroke:.18px #fff;">0s</div>
<div style="left:1469.09px;top:644.05px;width:48.75px;height:2px;background:#3ec04c;border-radius:1px;"></div>
<svg style="position:absolute;left:1454.29px;top:594.85px;" width="12" height="14.6" viewBox="0 0 12 14.6"><path d="M6 0 9.6 4.8H8.2l3 4.2H9.4l2.6 3.6H7.1V14.6H4.9V12.6H0L2.6 9H.8l3-4.2H2.4z" fill="#22c55e"/></svg>
<div style="left:1545.72px;top:590.05px;width:89.55px;height:109.8px;background:linear-gradient(180deg,#2c9a3c 0%,#4cb45a 40%,#8edc9c 80%,#b4f4c0 100%);border-radius:8.5px;"></div>
<div style="left:1547.72px;top:592.05px;width:85.55px;height:105.8px;background:linear-gradient(175deg,#1c3223 0%,#25392a 35%,#36463a 80%,#3f4d41 100%);border-radius:6.5px;"></div>
<div class="t" style="left:1573.6px;top:609px;height:25px;font-size:18.6px;line-height:25px;color:#fff;font-family:'Liberation Mono',monospace;letter-spacing:-1.16px;-webkit-text-stroke:.18px #fff;">131</div>
<div class="t" style="left:1578.6px;top:661px;height:25px;font-size:18.6px;line-height:25px;color:#fff;font-family:'Liberation Mono',monospace;letter-spacing:-1.16px;-webkit-text-stroke:.18px #fff;">0s</div>
<div style="left:1566.52px;top:644.05px;width:48.75px;height:2px;background:#3ec04c;border-radius:1px;"></div>
<svg style="position:absolute;left:1551.72px;top:594.85px;" width="12" height="14.6" viewBox="0 0 12 14.6"><path d="M6 0 9.6 4.8H8.2l3 4.2H9.4l2.6 3.6H7.1V14.6H4.9V12.6H0L2.6 9H.8l3-4.2H2.4z" fill="#22c55e"/></svg>
<div class="ol" style="left:661px;top:217px;width:979px;height:490px;border-radius:18px 14px 18px 18px;"></div>
<div style="left:1651px;top:224px;width:56.2px;height:55.8px;background:#1e1e23;border:2px solid #22c55e;border-radius:15px;"></div>
<div class="t" style="left:1479px;top:242px;width:400px;height:20px;margin-left:-0.15px;text-align:center;font-size:14px;line-height:20px;color:#fff;font-weight:bold;transform:scaleX(0.860);transform-origin:50% 50%;letter-spacing:-0.3px;">FULL</div>
<div style="left:1651px;top:291.8px;width:56.2px;height:352.2px;background:linear-gradient(180deg,#1b2236 0%,#1d2843 48%,#1c2640 55%,#1b2238 100%);border-radius:14px;"></div>
<div style="left:1667px;top:310.9px;width:24px;height:1px;background:#474e66;"></div>
<div style="left:1667px;top:322.9px;width:24px;height:1px;background:#474e66;"></div>
<div style="left:1667px;top:334.9px;width:24px;height:1px;background:#474e66;"></div>
<div style="left:1667px;top:346.9px;width:24px;height:1px;background:#474e66;"></div>
<div style="left:1667px;top:358.9px;width:24px;height:1px;background:#474e66;"></div>
<div style="left:1667px;top:370.9px;width:24px;height:1px;background:#474e66;"></div>
<div style="left:1667px;top:382.9px;width:24px;height:1px;background:#474e66;"></div>
<div style="left:1667px;top:394.9px;width:24px;height:1px;background:#474e66;"></div>
<div style="left:1667px;top:406.9px;width:24px;height:1px;background:#474e66;"></div>
<div style="left:1667px;top:418.9px;width:24px;height:1px;background:#474e66;"></div>
<div style="left:1667px;top:430.9px;width:24px;height:1px;background:#474e66;"></div>
<div style="left:1667px;top:442.9px;width:24px;height:1px;background:#474e66;"></div>
<div style="left:1667px;top:454.9px;width:24px;height:1px;background:#474e66;"></div>
<div style="left:1667px;top:466.9px;width:24px;height:1px;background:#474e66;"></div>
<div style="left:1667px;top:478.9px;width:24px;height:1px;background:#474e66;"></div>
<div style="left:1667px;top:490.9px;width:24px;height:1px;background:#474e66;"></div>
<div style="left:1667px;top:502.9px;width:24px;height:1px;background:#474e66;"></div>
<div style="left:1667px;top:514.9px;width:24px;height:1px;background:#474e66;"></div>
<div style="left:1667px;top:526.9px;width:24px;height:1px;background:#474e66;"></div>
<div style="left:1667px;top:538.9px;width:24px;height:1px;background:#474e66;"></div>
<div style="left:1667px;top:550.9px;width:24px;height:1px;background:#474e66;"></div>
<div style="left:1667px;top:562.9px;width:24px;height:1px;background:#474e66;"></div>
<div style="left:1667px;top:574.9px;width:24px;height:1px;background:#474e66;"></div>
<div style="left:1667px;top:586.9px;width:24px;height:1px;background:#474e66;"></div>
<div style="left:1667px;top:598.9px;width:24px;height:1px;background:#474e66;"></div>
<div style="left:1667px;top:610.9px;width:24px;height:1px;background:#474e66;"></div>
<div style="left:1667px;top:622.9px;width:24px;height:1px;background:#474e66;"></div>
<div style="left:1659px;top:462.8px;width:40px;height:7.2px;background:#f0f0fa;border-radius:3.5px;box-shadow:0 0 4px rgba(255,255,255,.35);"></div>
<div style="left:1651px;top:656.2px;width:56.2px;height:55.8px;background:#1e1e23;border:2px solid #ef4444;border-radius:15px;"></div>
<div class="t" style="left:1479px;top:674px;width:400px;height:20px;margin-left:-0.15px;text-align:center;font-size:14px;line-height:20px;color:#fff;font-weight:bold;transform:scaleX(0.967);transform-origin:50% 50%;letter-spacing:-0.3px;">OUT</div>
<div class="ol" style="left:1643px;top:217px;width:72px;height:501px;border-radius:14px 14px 18px 18px;"></div>
<div style="left:656.5px;top:722px;width:1048px;height:291px;background:#27272c;border-radius:18px;"></div>
<div style="left:654px;top:720px;width:1053px;height:295px;border:2px solid #3b82f6;border-radius:20px;"></div>
<div style="left:1156px;top:732.3px;width:47.5px;height:3.2px;background:#6c6c74;border-radius:2px;"></div>
<div style="left:677px;top:748px;width:834px;height:36px;background:#313137;border-radius:11px;"></div>
<div style="left:1519px;top:748px;width:52px;height:36px;background:#37373d;border-radius:12px;"></div>
<div style="left:1575.5px;top:748px;width:51px;height:36px;background:#37373d;border-radius:12px;"></div>
<div style="left:1631px;top:748px;width:52px;height:36px;background:#37373d;border-radius:12px;"></div>
<svg style="position:absolute;left:1540px;top:760px;" width="8.4" height="12" viewBox="0 0 8.4 12"><path d="M6.6 1.3 1.8 6l4.8 4.7" fill="none" stroke="#f4f4fa" stroke-width="2" stroke-linecap="round" stroke-linejoin="round"/></svg>
<svg style="position:absolute;left:1597.6px;top:760px;" width="8.4" height="12" viewBox="0 0 8.4 12"><path d="M1.8 1.3 6.6 6l-4.8 4.7" fill="none" stroke="#f4f4fa" stroke-width="2" stroke-linecap="round" stroke-linejoin="round"/></svg>
<svg style="position:absolute;left:1648.1px;top:757.1px;" width="18" height="18" viewBox="0 0 18 18"><circle cx="9" cy="9" r="7.9" fill="none" stroke="#3b82f6" stroke-width="1.6"/><path d="M9 12.6V8.2" stroke="#3b82f6" stroke-width="2" stroke-linecap="round"/><path d="M5.9 9 9 5.6 12.1 9z" fill="#3b82f6" stroke="#3b82f6" stroke-width=".8" stroke-linejoin="round"/></svg>
<div style="left:677.4px;top:800px;width:90px;height:36px;background:#36363c;box-shadow:inset 0 0 0 1.6px #22c55e;border-radius:12px;"></div>
<div class="t" style="left:522.4px;top:809px;width:400px;height:18px;margin-left:0.42px;text-align:center;font-size:12.5px;line-height:18px;color:#dcdce6;-webkit-text-stroke:0.45px #dcdce6;letter-spacing:0.84px;">Update</div>
<div style="left:772px;top:800px;width:90px;height:36px;background:#36363c;box-shadow:inset 0 0 0 1.6px #ef4444;border-radius:12px;"></div>
<div class="t" style="left:617px;top:809px;width:400px;height:18px;margin-left:-0.06px;text-align:center;font-size:12.5px;line-height:18px;color:#dcdce6;-webkit-text-stroke:0.45px #dcdce6;letter-spacing:-0.11px;">Rec</div>
<div style="left:866.6px;top:800px;width:90px;height:36px;background:#36363c;box-shadow:inset 0 0 0 1.6px #3b82f6;border-radius:12px;"></div>
<div class="t" style="left:711.6px;top:809px;width:400px;height:18px;margin-left:0.16px;text-align:center;font-size:12.5px;line-height:18px;color:#dcdce6;-webkit-text-stroke:0.45px #dcdce6;letter-spacing:0.32px;">Go</div>
<div style="left:677px;top:840px;width:66.8px;height:36px;background:#303036;border-radius:12px;"></div>
<div class="t" style="left:510.4px;top:849px;width:400px;height:18px;margin-left:-0.02px;text-align:center;font-size:12.5px;line-height:18px;color:#c8c8d2;-webkit-text-stroke:0.15px #c8c8d2;letter-spacing:-0.03px;">Look</div>
<div style="left:748.1px;top:840px;width:66.8px;height:36px;background:#303036;border-radius:12px;"></div>
<div class="t" style="left:581.5px;top:849px;width:400px;height:18px;margin-left:0.34px;text-align:center;font-size:12.5px;line-height:18px;color:#c8c8d2;-webkit-text-stroke:0.15px #c8c8d2;letter-spacing:0.69px;">Group</div>
<div style="left:819.2px;top:840px;width:66.8px;height:36px;background:#303036;border-radius:12px;"></div>
<div class="t" style="left:652.6px;top:849px;width:400px;height:18px;margin-left:0.41px;text-align:center;font-size:12.5px;line-height:18px;color:#c8c8d2;-webkit-text-stroke:0.15px #c8c8d2;letter-spacing:0.82px;">Macro</div>
<div style="left:890.3px;top:840px;width:66.8px;height:36px;background:#303036;border-radius:12px;"></div>
<div class="t" style="left:723.7px;top:849px;width:400px;height:18px;margin-left:0.47px;text-align:center;font-size:12.5px;line-height:18px;color:#c8c8d2;-webkit-text-stroke:0.15px #c8c8d2;letter-spacing:0.94px;">Copy</div>
<div style="left:677px;top:880px;width:66.8px;height:36px;background:#303036;border-radius:12px;"></div>
<div class="t" style="left:510.4px;top:889px;width:400px;height:18px;margin-left:0.24px;text-align:center;font-size:12.5px;line-height:18px;color:#c8c8d2;-webkit-text-stroke:0.15px #c8c8d2;letter-spacing:0.48px;">Favorite</div>
<div style="left:748.1px;top:880px;width:66.8px;height:36px;background:#303036;border-radius:12px;"></div>
<div class="t" style="left:581.5px;top:889px;width:400px;height:18px;margin-left:0.18px;text-align:center;font-size:12.5px;line-height:18px;color:#c8c8d2;-webkit-text-stroke:0.15px #c8c8d2;letter-spacing:0.35px;">Effect</div>
<div style="left:819.2px;top:880px;width:66.8px;height:36px;background:#303036;border-radius:12px;"></div>
<div class="t" style="left:652.6px;top:889px;width:400px;height:18px;margin-left:0.23px;text-align:center;font-size:12.5px;line-height:18px;color:#c8c8d2;-webkit-text-stroke:0.15px #c8c8d2;letter-spacing:0.46px;">Fader</div>
<div style="left:890.3px;top:880px;width:66.8px;height:36px;background:#303036;border-radius:12px;"></div>
<div class="t" style="left:723.7px;top:889px;width:400px;height:18px;margin-left:0.23px;text-align:center;font-size:12.5px;line-height:18px;color:#c8c8d2;-webkit-text-stroke:0.15px #c8c8d2;letter-spacing:0.45px;">Recall</div>
<div style="left:677px;top:920px;width:66.8px;height:36px;background:#303036;border-radius:12px;"></div>
<div class="t" style="left:510.4px;top:929px;width:400px;height:18px;margin-left:0.29px;text-align:center;font-size:12.5px;line-height:18px;color:#c8c8d2;-webkit-text-stroke:0.15px #c8c8d2;letter-spacing:0.58px;">Col Tmp</div>
<div style="left:748.1px;top:920px;width:66.8px;height:36px;background:#303036;border-radius:12px;"></div>
<div class="t" style="left:581.5px;top:929px;width:400px;height:18px;margin-left:0.27px;text-align:center;font-size:12.5px;line-height:18px;color:#c8c8d2;-webkit-text-stroke:0.15px #c8c8d2;letter-spacing:0.54px;">Tint</div>
<div style="left:819.2px;top:920px;width:66.8px;height:36px;background:#303036;border-radius:12px;"></div>
<div class="t" style="left:652.6px;top:929px;width:400px;height:18px;margin-left:0.21px;text-align:center;font-size:12.5px;line-height:18px;color:#c8c8d2;-webkit-text-stroke:0.15px #c8c8d2;letter-spacing:0.42px;">Col Xfd</div>
<div style="left:890.3px;top:920px;width:66.8px;height:36px;background:#303036;border-radius:12px;"></div>
<div class="t" style="left:723.7px;top:929px;width:400px;height:18px;margin-left:0.29px;text-align:center;font-size:12.5px;line-height:18px;color:#c8c8d2;-webkit-text-stroke:0.15px #c8c8d2;letter-spacing:0.58px;">Swap</div>
<div style="left:973px;top:800px;width:88.3px;height:36px;background:#303036;border-radius:12px;"></div>
<div class="t" style="left:817.15px;top:809px;width:400px;height:18px;margin-left:0px;text-align:center;font-size:12.5px;line-height:18px;color:#c8c8d2;-webkit-text-stroke:0.15px #c8c8d2;">7</div>
<div style="left:1065.7px;top:800px;width:88.3px;height:36px;background:#303036;border-radius:12px;"></div>
<div class="t" style="left:909.85px;top:809px;width:400px;height:18px;margin-left:0px;text-align:center;font-size:12.5px;line-height:18px;color:#c8c8d2;-webkit-text-stroke:0.15px #c8c8d2;">8</div>
<div style="left:1158.4px;top:800px;width:88.3px;height:36px;background:#303036;border-radius:12px;"></div>
<div class="t" style="left:1002.55px;top:809px;width:400px;height:18px;margin-left:0px;text-align:center;font-size:12.5px;line-height:18px;color:#c8c8d2;-webkit-text-stroke:0.15px #c8c8d2;">9</div>
<div style="left:973px;top:840px;width:88.3px;height:36px;background:#303036;border-radius:12px;"></div>
<div class="t" style="left:817.15px;top:849px;width:400px;height:18px;margin-left:0px;text-align:center;font-size:12.5px;line-height:18px;color:#c8c8d2;-webkit-text-stroke:0.15px #c8c8d2;">4</div>
<div style="left:1065.7px;top:840px;width:88.3px;height:36px;background:#303036;border-radius:12px;"></div>
<div class="t" style="left:909.85px;top:849px;width:400px;height:18px;margin-left:0px;text-align:center;font-size:12.5px;line-height:18px;color:#c8c8d2;-webkit-text-stroke:0.15px #c8c8d2;">5</div>
<div style="left:1158.4px;top:840px;width:88.3px;height:36px;background:#303036;border-radius:12px;"></div>
<div class="t" style="left:1002.55px;top:849px;width:400px;height:18px;margin-left:0px;text-align:center;font-size:12.5px;line-height:18px;color:#c8c8d2;-webkit-text-stroke:0.15px #c8c8d2;">6</div>
<div style="left:973px;top:880px;width:88.3px;height:36px;background:#303036;border-radius:12px;"></div>
<div class="t" style="left:817.15px;top:889px;width:400px;height:18px;margin-left:0px;text-align:center;font-size:12.5px;line-height:18px;color:#c8c8d2;-webkit-text-stroke:0.15px #c8c8d2;">1</div>
<div style="left:1065.7px;top:880px;width:88.3px;height:36px;background:#303036;border-radius:12px;"></div>
<div class="t" style="left:909.85px;top:889px;width:400px;height:18px;margin-left:0px;text-align:center;font-size:12.5px;line-height:18px;color:#c8c8d2;-webkit-text-stroke:0.15px #c8c8d2;">2</div>
<div style="left:1158.4px;top:880px;width:88.3px;height:36px;background:#303036;border-radius:12px;"></div>
<div class="t" style="left:1002.55px;top:889px;width:400px;height:18px;margin-left:0px;text-align:center;font-size:12.5px;line-height:18px;color:#c8c8d2;-webkit-text-stroke:0.15px #c8c8d2;">3</div>
<div style="left:973px;top:920px;width:88.3px;height:36px;background:#303036;border-radius:12px;"></div>
<div class="t" style="left:817.15px;top:929px;width:400px;height:18px;margin-left:0px;text-align:center;font-size:12.5px;line-height:18px;color:#c8c8d2;-webkit-text-stroke:0.15px #c8c8d2;">.</div>
<div style="left:1065.7px;top:920px;width:88.3px;height:36px;background:#303036;border-radius:12px;"></div>
<div class="t" style="left:909.85px;top:929px;width:400px;height:18px;margin-left:0px;text-align:center;font-size:12.5px;line-height:18px;color:#c8c8d2;-webkit-text-stroke:0.15px #c8c8d2;">0</div>
<div style="left:1158.4px;top:920px;width:88.3px;height:36px;background:#303036;border-radius:12px;"></div>
<div class="t" style="left:1002.55px;top:929px;width:400px;height:18px;margin-left:0px;text-align:center;font-size:12.5px;line-height:18px;color:#c8c8d2;-webkit-text-stroke:0.15px #c8c8d2;">/</div>
<div style="left:1263.3px;top:800px;width:73.6px;height:36px;background:#303036;border-radius:12px;"></div>
<div class="t" style="left:1100.1px;top:809px;width:400px;height:18px;margin-left:0px;text-align:center;font-size:12.5px;line-height:18px;color:#c8c8d2;-webkit-text-stroke:0.15px #c8c8d2;">+</div>
<div style="left:1341.15px;top:800px;width:73.6px;height:36px;background:#303036;border-radius:12px;"></div>
<div class="t" style="left:1177.95px;top:809px;width:400px;height:18px;margin-left:0.44px;text-align:center;font-size:12.5px;line-height:18px;color:#c8c8d2;-webkit-text-stroke:0.15px #c8c8d2;letter-spacing:0.89px;">Home</div>
<div style="left:1419px;top:800px;width:73.6px;height:36px;background:#303036;border-radius:12px;"></div>
<div class="t" style="left:1255.8px;top:809px;width:400px;height:18px;margin-left:0.01px;text-align:center;font-size:12.5px;line-height:18px;color:#c8c8d2;-webkit-text-stroke:0.15px #c8c8d2;letter-spacing:0.02px;">Freeze</div>
<div style="left:1496.85px;top:800px;width:73.6px;height:36px;background:#303036;border-radius:12px;"></div>
<div class="t" style="left:1333.65px;top:809px;width:400px;height:18px;margin-left:0.14px;text-align:center;font-size:12.5px;line-height:18px;color:#c8c8d2;-webkit-text-stroke:0.15px #c8c8d2;letter-spacing:0.27px;">Delete</div>
<div style="left:1263.3px;top:840px;width:73.6px;height:36px;background:#303036;border-radius:12px;"></div>
<div class="t" style="left:1100.1px;top:849px;width:400px;height:18px;margin-left:0px;text-align:center;font-size:12.5px;line-height:18px;color:#c8c8d2;-webkit-text-stroke:0.15px #c8c8d2;">-</div>
<div style="left:1341.15px;top:840px;width:73.6px;height:36px;background:#303036;border-radius:12px;"></div>
<div class="t" style="left:1177.95px;top:849px;width:400px;height:18px;margin-left:0.14px;text-align:center;font-size:12.5px;line-height:18px;color:#c8c8d2;-webkit-text-stroke:0.15px #c8c8d2;letter-spacing:0.27px;">Release</div>
<div style="left:1419px;top:840px;width:73.6px;height:36px;background:#303036;border-radius:12px;"></div>
<div class="t" style="left:1255.8px;top:849px;width:400px;height:18px;margin-left:0.23px;text-align:center;font-size:12.5px;line-height:18px;color:#c8c8d2;-webkit-text-stroke:0.15px #c8c8d2;letter-spacing:0.45px;">Select</div>
<div style="left:1496.85px;top:840px;width:73.6px;height:36px;background:#303036;border-radius:12px;"></div>
<div class="t" style="left:1333.65px;top:849px;width:400px;height:18px;margin-left:0.29px;text-align:center;font-size:12.5px;line-height:18px;color:#c8c8d2;-webkit-text-stroke:0.15px #c8c8d2;letter-spacing:0.58px;">Offset</div>
<div style="left:1263.3px;top:880px;width:73.6px;height:36px;background:#303036;border-radius:12px;"></div>
<div class="t" style="left:1100.1px;top:889px;width:400px;height:18px;margin-left:0.22px;text-align:center;font-size:12.5px;line-height:18px;color:#c8c8d2;-webkit-text-stroke:0.15px #c8c8d2;letter-spacing:0.43px;">Thru</div>
<div style="left:1341.15px;top:880px;width:73.6px;height:36px;background:#303036;border-radius:12px;"></div>
<div class="t" style="left:1177.95px;top:889px;width:400px;height:18px;margin-left:0.46px;text-align:center;font-size:12.5px;line-height:18px;color:#c8c8d2;-webkit-text-stroke:0.15px #c8c8d2;letter-spacing:0.93px;">Out</div>
<div style="left:1419px;top:880px;width:73.6px;height:36px;background:#303036;border-radius:12px;"></div>
<div class="t" style="left:1255.8px;top:889px;width:400px;height:18px;margin-left:0.38px;text-align:center;font-size:12.5px;line-height:18px;color:#c8c8d2;-webkit-text-stroke:0.15px #c8c8d2;letter-spacing:0.75px;">if</div>
<div style="left:1496.85px;top:880px;width:73.6px;height:36px;background:#303036;border-radius:12px;"></div>
<div class="t" style="left:1333.65px;top:889px;width:400px;height:18px;margin-left:0.34px;text-align:center;font-size:12.5px;line-height:18px;color:#c8c8d2;-webkit-text-stroke:0.15px #c8c8d2;letter-spacing:0.68px;">Align</div>
<div style="left:1263.3px;top:920px;width:73.6px;height:36px;background:#303036;border-radius:12px;"></div>
<div class="t" style="left:1100.1px;top:929px;width:400px;height:18px;margin-left:0.34px;text-align:center;font-size:12.5px;line-height:18px;color:#c8c8d2;-webkit-text-stroke:0.15px #c8c8d2;letter-spacing:0.69px;">At</div>
<div style="left:1341.15px;top:920px;width:73.6px;height:36px;background:#303036;border-radius:12px;"></div>
<div class="t" style="left:1177.95px;top:929px;width:400px;height:18px;margin-left:0.06px;text-align:center;font-size:12.5px;line-height:18px;color:#c8c8d2;-webkit-text-stroke:0.15px #c8c8d2;letter-spacing:0.12px;">Full</div>
<div style="left:1419px;top:920px;width:73.6px;height:36px;background:#303036;border-radius:12px;"></div>
<div class="t" style="left:1255.8px;top:929px;width:400px;height:18px;margin-left:0.36px;text-align:center;font-size:12.5px;line-height:18px;color:#c8c8d2;-webkit-text-stroke:0.15px #c8c8d2;letter-spacing:0.73px;">Time</div>
<div style="left:1496.85px;top:920px;width:73.6px;height:36px;background:#303036;border-radius:12px;"></div>
<div class="t" style="left:1333.65px;top:929px;width:400px;height:18px;margin-left:-0.12px;text-align:center;font-size:12.5px;line-height:18px;color:#c8c8d2;-webkit-text-stroke:0.15px #c8c8d2;letter-spacing:-0.25px;">ON</div>
<div style="left:1575.5px;top:800px;width:107.5px;height:76px;background:#333339;border-radius:13px;"></div>
<div class="t" style="left:1429.25px;top:830px;width:400px;height:16px;margin-left:-0.11px;text-align:center;font-size:11.5px;line-height:16px;color:#d0d0da;-webkit-text-stroke:0.5px #d0d0da;letter-spacing:-0.21px;">CLEAR</div>
<div style="left:1575.5px;top:880px;width:107.5px;height:76px;background:linear-gradient(100deg,#1f8ee8 0%,#2563eb 55%,#2b3ef0 100%);border-radius:13px;box-shadow:0 0 12px rgba(37,99,235,.4);"></div>
<div class="t" style="left:1429.25px;top:910px;width:400px;height:16px;margin-left:-0.15px;text-align:center;font-size:11.5px;line-height:16px;color:#fff;-webkit-text-stroke:0.55px #fff;transform:scaleX(0.966);transform-origin:50% 50%;letter-spacing:-0.3px;">ENTER</div>
<div style="left:677.4px;top:964px;width:160.4px;height:35.8px;background:#36363c;box-shadow:inset 0 0 0 1.6px #efd23f;border-radius:12px;"></div>
<div class="t" style="left:557.6px;top:974px;width:400px;height:16px;margin-left:-0.04px;text-align:center;font-size:11.5px;line-height:16px;color:#d0d0da;-webkit-text-stroke:0.5px #d0d0da;letter-spacing:-0.07px;">INTENSITY</div>
<div style="left:846.36px;top:964px;width:160.4px;height:35.8px;background:#36363c;box-shadow:inset 0 0 0 1.6px #efd23f;border-radius:12px;"></div>
<div class="t" style="left:726.56px;top:974px;width:400px;height:16px;margin-left:0.03px;text-align:center;font-size:11.5px;line-height:16px;color:#d0d0da;-webkit-text-stroke:0.5px #d0d0da;letter-spacing:0.06px;">FOCUS</div>
<div style="left:1015.32px;top:964px;width:160.4px;height:35.8px;background:#36363c;box-shadow:inset 0 0 0 1.6px #efd23f;border-radius:12px;"></div>
<div class="t" style="left:895.52px;top:974px;width:400px;height:16px;margin-left:0.08px;text-align:center;font-size:11.5px;line-height:16px;color:#d0d0da;-webkit-text-stroke:0.5px #d0d0da;letter-spacing:0.15px;">COLOR</div>
<div style="left:1184.28px;top:964px;width:160.4px;height:35.8px;background:#36363c;box-shadow:inset 0 0 0 1.6px #efd23f;border-radius:12px;"></div>
<div class="t" style="left:1064.48px;top:974px;width:400px;height:16px;margin-left:0.15px;text-align:center;font-size:11.5px;line-height:16px;color:#d0d0da;-webkit-text-stroke:0.5px #d0d0da;letter-spacing:0.3px;">BEAM</div>
<div style="left:1353.24px;top:964px;width:160.4px;height:35.8px;background:#36363c;box-shadow:inset 0 0 0 1.6px #efd23f;border-radius:12px;"></div>
<div class="t" style="left:1233.44px;top:974px;width:400px;height:16px;margin-left:-0.15px;text-align:center;font-size:11.5px;line-height:16px;color:#d0d0da;-webkit-text-stroke:0.5px #d0d0da;letter-spacing:-0.3px;">SHUTTER</div>
<div style="left:1522.2px;top:964px;width:160.4px;height:35.8px;background:#36363c;box-shadow:inset 0 0 0 1.6px #efd23f;border-radius:12px;"></div>
<div class="t" style="left:1402.4px;top:974px;width:400px;height:16px;margin-left:0.11px;text-align:center;font-size:11.5px;line-height:16px;color:#d0d0da;-webkit-text-stroke:0.5px #d0d0da;letter-spacing:0.21px;">CONTROL</div>
<div style="left:377px;top:1027.8px;width:1266px;height:48.7px;background:#1b1b21;border-radius:21px;"></div>
<div style="left:377px;top:1027.8px;width:246px;height:48.7px;background:#1f2942;border-radius:21px;"></div>
<div style="left:1651px;top:1027.8px;width:54px;height:48.7px;background:#1b1b21;border-radius:21px 16px 16px 21px;"></div>
<div class="t" style="left:299.75px;top:1042px;width:400px;height:20px;margin-left:-0.06px;text-align:center;font-size:14.5px;line-height:20px;color:#fff;font-weight:bold;letter-spacing:-0.13px;">Fixtures</div>
<div class="t" style="left:541px;top:1042px;width:400px;height:20px;margin-left:0.29px;text-align:center;font-size:14.5px;line-height:20px;color:#c0c0c8;letter-spacing:0.57px;">Faders</div>
<div style="left:770px;top:1042px;width:21.5px;height:20px;background:#1e2a44;border-radius:5px;"></div>
<div class="t" style="left:580.75px;top:1044px;width:400px;height:16px;margin-left:-0.17px;text-align:center;font-size:10.5px;line-height:16px;color:#c8d4ec;font-weight:bold;letter-spacing:-0.34px;">P2</div>
<div class="t" style="left:807.75px;top:1042px;width:400px;height:20px;margin-left:0.3px;text-align:center;font-size:14.5px;line-height:20px;color:#c0c0c8;letter-spacing:0.61px;">Encoders</div>
<div class="t" style="left:1062px;top:1042px;width:400px;height:20px;margin-left:0.09px;text-align:center;font-size:14.5px;line-height:20px;color:#c0c0c8;letter-spacing:0.17px;">Live Plot</div>
<div class="t" style="left:1315.75px;top:1042px;width:400px;height:20px;margin-left:0.43px;text-align:center;font-size:14.5px;line-height:20px;color:#c0c0c8;letter-spacing:0.86px;">Patch</div>
<svg style="position:absolute;left:1669.8px;top:1044.9px;" width="18.4" height="14.2" viewBox="0 0 18.4 14.2"><rect x="0" y="0" width="3.1" height="3.1" fill="#e2e2ec"/><rect x="5.1" y="0" width="3.1" height="3.1" fill="#e2e2ec"/><rect x="10.2" y="0" width="3.1" height="3.1" fill="#e2e2ec"/><rect x="15.3" y="0" width="3.1" height="3.1" fill="#e2e2ec"/><rect x="0" y="5.9" width="3.1" height="3.1" fill="#e2e2ec"/><rect x="5.1" y="5.9" width="3.1" height="3.1" fill="#e2e2ec"/><rect x="10.2" y="5.9" width="3.1" height="3.1" fill="#e2e2ec"/><rect x="15.3" y="5.9" width="3.1" height="3.1" fill="#e2e2ec"/><rect x="0" y="11.8" width="18.4" height="2.4" fill="#e2e2ec"/></svg>
<div class="ol" style="left:369px;top:1024px;width:1338px;height:56px;border-radius:19px;"></div>
<div style="left:1694.5px;top:81.8px;width:52.5px;height:2px;background:#3b82f6;"></div>
<div style="left:1746px;top:55.95px;width:163px;height:56px;background:#3e83f7;border-radius:9px;"></div>
<div class="t" style="left:1780.2px;top:68px;height:31px;font-size:24px;line-height:31px;color:#f0f2ff;-webkit-text-stroke:0.35px #f0f2ff;letter-spacing:0.22px;">1. Header</div>
<div style="left:323px;top:257px;width:42px;height:2px;background:#3b82f6;"></div>
<div style="left:34px;top:229.75px;width:290px;height:56px;background:#3e83f7;border-radius:9px;"></div>
<div class="t" style="left:62.5px;top:242px;height:31px;font-size:24px;line-height:31px;color:#f0f2ff;-webkit-text-stroke:0.35px #f0f2ff;letter-spacing:1.14px;">2. Sidebar Navigator</div>
<div style="left:323px;top:418.9px;width:339px;height:2px;background:#3b82f6;"></div>
<div style="left:158px;top:392.9px;width:166.2px;height:56px;background:#3e83f7;border-radius:9px;"></div>
<div class="t" style="left:184.8px;top:405px;height:31px;font-size:24px;line-height:31px;color:#f0f2ff;-webkit-text-stroke:0.35px #f0f2ff;letter-spacing:0.53px;">4. Fixtures</div>
<div style="left:344px;top:687.7px;width:21px;height:2px;background:#3b82f6;"></div>
<div style="left:178px;top:661px;width:168px;height:56px;background:#3e83f7;border-radius:9px;"></div>
<div class="t" style="left:206.1px;top:673px;height:31px;font-size:24px;line-height:31px;color:#f0f2ff;-webkit-text-stroke:0.35px #f0f2ff;letter-spacing:1px;">3. Sidebar</div>
<div style="left:1714px;top:186px;width:27px;height:2px;background:#3b82f6;"></div>
<div style="left:1740px;top:160px;width:214px;height:56px;background:#3e83f7;border-radius:9px;"></div>
<div class="t" style="left:1767.2px;top:172px;height:31px;font-size:24px;line-height:31px;color:#f0f2ff;-webkit-text-stroke:0.35px #f0f2ff;letter-spacing:1.35px;">6. Top Navbar</div>
<div style="left:1714px;top:468.9px;width:29px;height:2px;background:#3b82f6;"></div>
<div style="left:1742px;top:442.9px;width:215px;height:56px;background:#3e83f7;border-radius:9px;"></div>
<div class="t" style="left:1769.2px;top:455px;height:31px;font-size:24px;line-height:31px;color:#f0f2ff;-webkit-text-stroke:0.35px #f0f2ff;letter-spacing:0.56px;">5. Level Wheel</div>
<div style="left:1706px;top:866.9px;width:51px;height:2px;background:#3b82f6;"></div>
<div style="left:1756px;top:840px;width:302px;height:56px;background:#3e83f7;border-radius:9px;"></div>
<div class="t" style="left:1784.5px;top:852px;height:31px;font-size:24px;line-height:31px;color:#f0f2ff;-webkit-text-stroke:0.35px #f0f2ff;letter-spacing:1.68px;">7. Command Keypad</div>
<div style="left:1706px;top:1051px;width:44px;height:2px;background:#3b82f6;"></div>
<div style="left:1749px;top:1024.1px;width:256px;height:56px;background:#3e83f7;border-radius:9px;"></div>
<div class="t" style="left:1775.9px;top:1036px;height:31px;font-size:24px;line-height:31px;color:#f0f2ff;-webkit-text-stroke:0.35px #f0f2ff;letter-spacing:1.4px;">8. Bottom Navbar</div>
</div>
</body></html>
